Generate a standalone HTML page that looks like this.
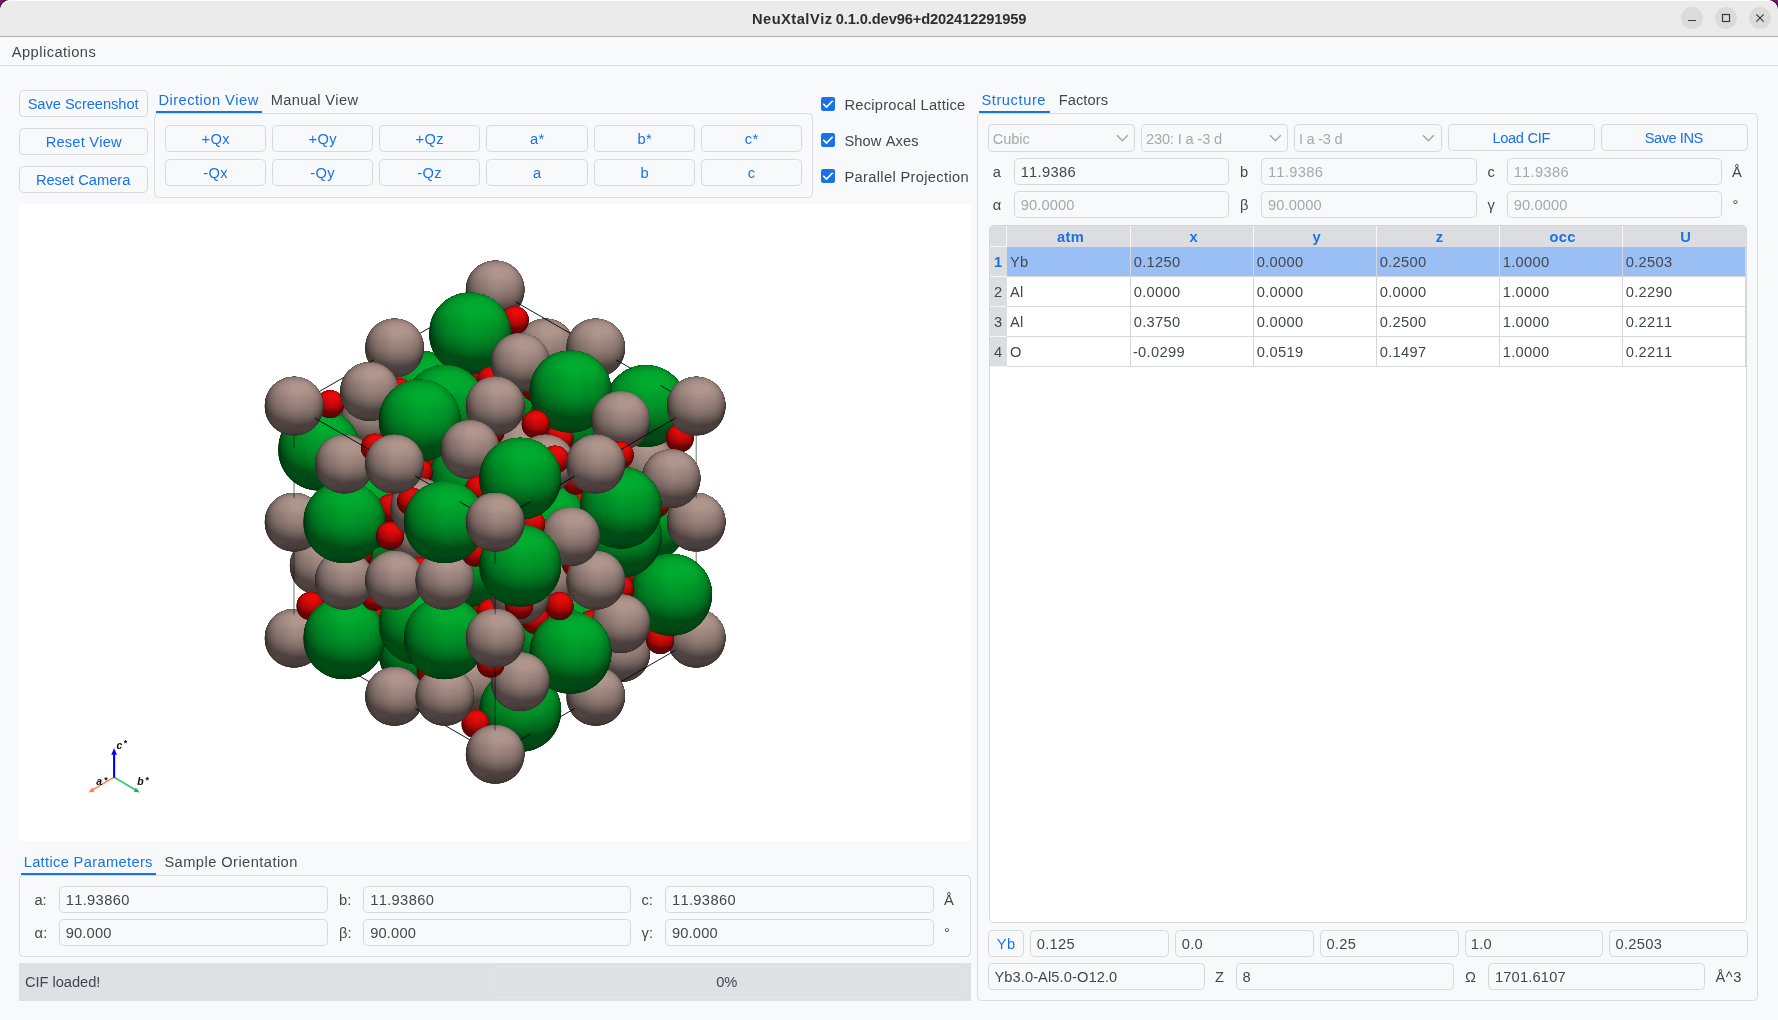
<!DOCTYPE html>
<html><head><meta charset="utf-8"><title>NeuXtalViz</title><style>
html,body{margin:0;padding:0;}
body{width:1778px;height:1020px;overflow:hidden;background:#6c1e68;position:relative;font-family:"Liberation Sans",sans-serif;font-size:14.67px;font-kerning:none;}
#win{position:absolute;left:0;top:0;width:1778px;height:1020px;background:#f8f9fb;border-radius:10px 10px 0 0;overflow:hidden;box-shadow:0 0 0 1px #3a0838;}
.abs,.t,.btn,.fld,.pane,.ul,.tbl,.status,.prog,.wbtn{position:absolute;box-sizing:border-box;}
.t{white-space:nowrap;line-height:20px;height:20px;}
#titlebar{position:absolute;left:0;top:0;width:1778px;height:37px;background:#ebebeb;border-bottom:1px solid #adadad;box-sizing:border-box;border-radius:10px 10px 0 0;box-shadow:inset 0 1px 0 #fbfbfb;}
.wbtn{width:22px;height:22px;border-radius:11px;background:#dbdbdb;}
#menubar{position:absolute;left:0;top:37px;width:1778px;height:29px;border-bottom:1px solid #dcdee3;box-sizing:border-box;}
.btn{border:1px solid #d7d9df;border-radius:4.5px;background:#f8f9fb;}
.fld{border:1px solid #d7d9df;border-radius:4.5px;background:#f8f9fb;}
.pane{border:1px solid #d9dbe0;border-radius:4.5px;}
.ul{background:#1a72e8;}
.tbl{border:1px solid #d5d7dc;border-radius:4px;background:#fff;}
.status{background:#dfe0e4;}
.prog{border:1px solid #e4e5e9;border-radius:3px;}
#txt{position:absolute;left:0;top:0;width:1778px;height:1020px;will-change:transform;}
#view{position:absolute;left:19px;top:204px;width:952px;height:637px;background:#fff;overflow:hidden;}
#view>svg:first-child{position:absolute;left:-1px;top:0;}
</style></head><body><div id="win">
<div id="titlebar"></div>
<div class="wbtn" style="left:1681px;top:7px"></div>
<div class="wbtn" style="left:1715px;top:7px"></div>
<div class="wbtn" style="left:1749px;top:7px"></div>
<svg class="abs" style="left:1680px;top:6px" width="98" height="24" viewBox="1680 6 98 24"><g stroke="#3a3a3a" stroke-width="1.2" fill="none"><path d="M1688 20.5H1696"/><rect x="1722.5" y="14.5" width="7" height="7"/><path d="M1756.3 14.3L1763.7 21.7M1763.7 14.3L1756.3 21.7"/></g></svg>
<div id="menubar"></div>
<div class="btn" style="left:19px;top:90px;width:129px;height:27px;"></div>
<div class="btn" style="left:19px;top:128px;width:129px;height:27px;"></div>
<div class="btn" style="left:19px;top:166px;width:129px;height:27px;"></div>
<div class="ul" style="left:156px;top:110.5px;width:106px;height:2.2px;"></div>
<div class="pane" style="left:154px;top:113px;width:659px;height:85px;"></div>
<div class="btn" style="left:165px;top:125px;width:101px;height:27px;"></div>
<div class="btn" style="left:272px;top:125px;width:101px;height:27px;"></div>
<div class="btn" style="left:379px;top:125px;width:101px;height:27px;"></div>
<div class="btn" style="left:486px;top:125px;width:102px;height:27px;"></div>
<div class="btn" style="left:594px;top:125px;width:101px;height:27px;"></div>
<div class="btn" style="left:701px;top:125px;width:101px;height:27px;"></div>
<div class="btn" style="left:165px;top:159px;width:101px;height:27px;"></div>
<div class="btn" style="left:272px;top:159px;width:101px;height:27px;"></div>
<div class="btn" style="left:379px;top:159px;width:101px;height:27px;"></div>
<div class="btn" style="left:486px;top:159px;width:102px;height:27px;"></div>
<div class="btn" style="left:594px;top:159px;width:101px;height:27px;"></div>
<div class="btn" style="left:701px;top:159px;width:101px;height:27px;"></div>
<svg class="abs" style="left:821px;top:97px" width="14" height="14" viewBox="0 0 14 14"><rect width="14" height="14" rx="2.2" fill="#1a72e8"/><path d="M2.2 6.8L5.5 10L11.7 3.7" stroke="#fff" stroke-width="1.6" fill="none" stroke-linejoin="miter"/></svg>
<svg class="abs" style="left:821px;top:133px" width="14" height="14" viewBox="0 0 14 14"><rect width="14" height="14" rx="2.2" fill="#1a72e8"/><path d="M2.2 6.8L5.5 10L11.7 3.7" stroke="#fff" stroke-width="1.6" fill="none" stroke-linejoin="miter"/></svg>
<svg class="abs" style="left:821px;top:169px" width="14" height="14" viewBox="0 0 14 14"><rect width="14" height="14" rx="2.2" fill="#1a72e8"/><path d="M2.2 6.8L5.5 10L11.7 3.7" stroke="#fff" stroke-width="1.6" fill="none" stroke-linejoin="miter"/></svg>
<div id="view"><svg width="953" height="637" viewBox="18 204 953 637">
<defs><g id="sA"><circle r="29.3" fill="#292424"/><path d="M23.1 -18L21.4 -20L19.7 -21.7L18.1 -23L16.5 -24.2L15 -25.2L13.6 -26L12.2 -26.6L10.9 -27.2L9.6 -27.7L8.4 -28.1L7.3 -28.4L6.1 -28.7L4.9 -28.9L3.8 -29.1L2.6 -29.2L1.5 -29.3L0.2 -29.3L-1 -29.3L-2.3 -29.2L-3.7 -29.1L-5.2 -28.8L-6.8 -28.5L-8.5 -28L-10.3 -27.4L-12.3 -26.6L-14.3 -25.6L-16.5 -24.2L-18.7 -22.6L-20.9 -20.5L-23.1 -18L-25.1 -15.1L-26.8 -11.8L-28.2 -8L-29 -3.9L-29.2 0.4L-28.9 4.9L-27.8 9.4L-25.9 13.7L-23.3 17.7L-20.1 21.3L-16.2 24.4L-11.9 26.8L-7.2 28.4L-2.3 29.2L2.6 29.2L7.5 28.3L12.1 26.7L16.4 24.3L20.1 21.3L23.3 17.8L25.8 13.9L27.6 9.7L28.8 5.5L29.3 1.3L29.2 -2.7L28.6 -6.5L27.6 -9.9L26.3 -13L24.7 -15.7Z" fill="#302927"/><path d="M23.1 -18L21.4 -20L19.7 -21.7L18.1 -23L16.5 -24.2L15 -25.2L13.6 -26L12.2 -26.6L10.9 -27.2L9.6 -27.7L8.4 -28.1L7.3 -28.4L6.1 -28.7L4.9 -28.9L3.8 -29.1L2.6 -29.2L1.5 -29.3L0.2 -29.3L-1 -29.3L-2.3 -29.2L-3.7 -29.1L-5.2 -28.8L-6.8 -28.5L-8.5 -28L-10.3 -27.4L-12.3 -26.6L-14.3 -25.6L-16.5 -24.2L-18.7 -22.6L-20.9 -20.5L-23.1 -18L-25.1 -15.1L-26.8 -11.8L-28.2 -8L-28.9 -4L-28.8 0.1L-28.9 4.9L-27.8 9.4L-25.9 13.7L-23.3 17.7L-20.1 21.3L-16.2 24.4L-11.9 26.8L-7.2 28.4L-2.3 29.2L2.6 29.2L7.5 28.3L12.1 26.7L16.4 24.3L20.1 21.3L23.3 17.8L25.8 13.9L27.6 9.7L28.7 5.5L29.3 1.3L29.2 -2.7L28.6 -6.5L27.6 -9.9L26.3 -13L24.7 -15.7Z" fill="#352d2b"/><path d="M23.1 -18L21.4 -20L19.7 -21.7L18.1 -23L16.5 -24.2L15 -25.2L13.6 -26L12.2 -26.6L10.9 -27.2L9.6 -27.7L8.4 -28.1L7.3 -28.4L6.1 -28.7L4.9 -28.9L3.8 -29.1L2.6 -29.2L1.5 -29.3L0.2 -29.3L-1 -29.3L-2.3 -29.2L-3.7 -29.1L-5.2 -28.8L-6.8 -28.5L-8.5 -28L-10.3 -27.4L-12.3 -26.6L-14.3 -25.6L-16.5 -24.2L-18.7 -22.6L-20.9 -20.5L-23.1 -18L-25.1 -15.1L-26.8 -11.8L-28.2 -8L-28.7 -4.1L-28.6 0L-28.5 4.6L-27.8 9.3L-25.9 13.7L-23.3 17.7L-20.1 21.3L-16.2 24.4L-11.9 26.8L-7.2 28.4L-2.3 28.9L2.6 28.9L7.5 28.3L12.1 26.7L16.4 24.3L20.1 21.3L23.3 17.8L25.8 13.9L27.5 9.6L28.6 5.4L29.2 1.3L29.2 -2.7L28.6 -6.5L27.6 -9.9L26.3 -13L24.7 -15.7Z" fill="#3a322f"/><path d="M23.1 -18L21.4 -20L19.7 -21.7L18.1 -23L16.5 -24.2L15 -25.2L13.6 -26L12.2 -26.6L10.9 -27.2L9.6 -27.7L8.4 -28.1L7.3 -28.4L6.1 -28.7L4.9 -28.9L3.8 -29.1L2.6 -29.2L1.5 -29.3L0.2 -29.3L-1 -29.3L-2.3 -29.2L-3.7 -29.1L-5.2 -28.8L-6.8 -28.5L-8.5 -28L-10.3 -27.4L-12.3 -26.6L-14.3 -25.6L-16.5 -24.2L-18.7 -22.6L-20.9 -20.5L-23.1 -18L-25.1 -15.1L-26.8 -11.8L-28.1 -8L-28.5 -4.1L-28.3 -0.2L-27.4 3.8L-27.5 9.1L-25.9 13.7L-23.3 17.7L-20.1 21.3L-16.2 24.4L-11.9 26.8L-7.2 28.2L-2.2 28.2L2.6 28.1L7.5 28L12.1 26.6L16.4 24.3L20.1 21.3L23.3 17.7L25.6 13.6L27.1 9.1L28.5 5.3L29.2 1.3L29.2 -2.7L28.6 -6.5L27.6 -9.9L26.3 -13L24.7 -15.7Z" fill="#3f3633"/><path d="M23.1 -18L21.4 -20L19.7 -21.7L18.1 -23L16.5 -24.2L15 -25.2L13.6 -26L12.2 -26.6L10.9 -27.2L9.6 -27.7L8.4 -28.1L7.3 -28.4L6.1 -28.7L4.9 -28.9L3.8 -29.1L2.6 -29.2L1.5 -29.3L0.2 -29.3L-1 -29.3L-2.3 -29.2L-3.7 -29.1L-5.2 -28.8L-6.8 -28.5L-8.5 -28L-10.3 -27.4L-12.3 -26.6L-14.3 -25.6L-16.5 -24.2L-18.7 -22.6L-20.9 -20.5L-23.1 -18L-25.1 -15.1L-26.8 -11.8L-28 -8.1L-28.3 -4.3L-28 -0.3L-27.1 3.6L-26.5 8.3L-25.6 13.3L-23.2 17.6L-20 21.3L-16.2 24.3L-11.8 26.4L-7 27.3L-2.1 27.1L2.6 27L7.4 27.1L12 26.1L16.3 24L20 21L23 17.2L25 12.7L26.9 8.9L28.3 5.1L29.1 1.2L29.2 -2.7L28.6 -6.5L27.6 -9.9L26.3 -13L24.7 -15.7Z" fill="#443a38"/><path d="M23.1 -18L21.4 -20L19.7 -21.7L18.1 -23L16.5 -24.2L15 -25.2L13.6 -26L12.2 -26.6L10.9 -27.2L9.6 -27.7L8.4 -28.1L7.3 -28.4L6.1 -28.7L4.9 -28.9L3.8 -29.1L2.6 -29.2L1.5 -29.3L0.2 -29.3L-1 -29.3L-2.3 -29.2L-3.7 -29.1L-5.2 -28.8L-6.8 -28.5L-8.5 -28L-10.3 -27.4L-12.3 -26.6L-14.3 -25.6L-16.5 -24.2L-18.7 -22.6L-20.9 -20.5L-23.1 -18L-25.1 -15.1L-26.8 -11.8L-27.8 -8.1L-28 -4.4L-27.6 -0.5L-26.7 3.3L-25 6.9L-24.6 12.2L-22.8 17L-19.7 20.8L-15.9 23.7L-11.5 25.5L-6.5 25.1L-1.9 25.3L2.6 25L7.1 24.6L11.7 24.7L15.9 22.9L19.5 19.9L22.1 15.7L24.4 11.9L26.6 8.6L28.1 4.9L28.9 1.1L29.1 -2.7L28.6 -6.5L27.6 -9.9L26.3 -13L24.7 -15.7Z" fill="#493e3c"/><path d="M23.1 -18L21.4 -20L19.7 -21.7L18.1 -23L16.5 -24.2L15 -25.2L13.6 -26L12.2 -26.6L10.9 -27.2L9.6 -27.7L8.4 -28.1L7.3 -28.4L6.1 -28.7L4.9 -28.9L3.8 -29.1L2.6 -29.2L1.5 -29.3L0.2 -29.3L-1 -29.3L-2.3 -29.2L-3.7 -29.1L-5.2 -28.8L-6.8 -28.5L-8.5 -28L-10.3 -27.4L-12.3 -26.6L-14.3 -25.6L-16.5 -24.2L-18.7 -22.6L-20.9 -20.5L-23.1 -18L-25.1 -15.1L-26.7 -11.8L-27.6 -8.2L-27.6 -4.5L-27.3 -0.8L-26.3 3L-24.6 6.5L-22.3 9.6L-21.1 14.6L-18.8 19.2L-15.1 21.9L-10.3 21.7L-5.2 19L-1.5 21.2L2.6 20.2L6.5 18.5L10.3 18.2L14.4 18.3L17.9 16.2L21.2 14.2L24.1 11.5L26.3 8.3L27.9 4.7L28.8 1L29.1 -2.8L28.6 -6.5L27.6 -9.9L26.3 -13L24.7 -15.7Z" fill="#4e4340"/><path d="M23.1 -18L21.4 -20L19.7 -21.7L18.1 -23L16.5 -24.2L15 -25.2L13.6 -26L12.2 -26.6L10.9 -27.2L9.6 -27.7L8.4 -28.1L7.3 -28.4L6.1 -28.7L4.9 -28.9L3.8 -29.1L2.6 -29.2L1.5 -29.3L0.2 -29.3L-1 -29.3L-2.3 -29.2L-3.7 -29.1L-5.2 -28.8L-6.8 -28.5L-8.5 -28L-10.3 -27.4L-12.3 -26.6L-14.3 -25.6L-16.5 -24.2L-18.7 -22.6L-20.9 -20.5L-23.1 -18L-25.1 -15.1L-26.6 -11.8L-27.3 -8.3L-27.2 -4.7L-26.8 -1L-25.8 2.6L-24.1 6.1L-21.8 9.1L-18.9 11.7L-15.7 13.7L-12.1 15.2L-8.4 16L-4.9 17.2L-1.1 17.9L2.6 18.1L6.4 17.7L10.2 17.4L13.9 16.8L17.6 15.5L20.9 13.6L23.8 11.1L26 8L27.6 4.5L28.5 0.8L28.9 -2.8L28.6 -6.5L27.6 -9.9L26.3 -13L24.7 -15.7Z" fill="#534744"/><path d="M23.1 -18L21.4 -20L19.7 -21.7L18.1 -23L16.5 -24.2L15 -25.2L13.6 -26L12.2 -26.6L10.9 -27.2L9.6 -27.7L8.4 -28.1L7.3 -28.4L6.1 -28.7L4.9 -28.9L3.8 -29.1L2.6 -29.2L1.5 -29.3L0.2 -29.3L-1 -29.3L-2.3 -29.2L-3.7 -29.1L-5.2 -28.8L-6.8 -28.5L-8.5 -28L-10.3 -27.4L-12.3 -26.6L-14.3 -25.6L-16.5 -24.2L-18.7 -22.6L-20.9 -20.5L-23.1 -18L-25 -15.1L-26.3 -11.9L-27 -8.4L-26.8 -4.9L-26.3 -1.3L-25.3 2.3L-23.6 5.6L-21.3 8.5L-18.4 11L-15.2 12.9L-11.8 14.3L-8.2 15.2L-4.7 16.4L-1.1 17.1L2.6 17.3L6.3 16.9L10 16.5L13.7 16L17.3 14.8L20.6 13L23.4 10.6L25.7 7.6L27.3 4.2L28.3 0.6L28.7 -2.9L28.5 -6.5L27.6 -9.9L26.3 -13L24.7 -15.7Z" fill="#584b48"/><path d="M23.1 -18L21.4 -20L19.7 -21.7L18.1 -23L16.5 -24.2L15 -25.2L13.6 -26L12.2 -26.6L10.9 -27.2L9.6 -27.7L8.4 -28.1L7.3 -28.4L6.1 -28.7L4.9 -28.9L3.8 -29.1L2.6 -29.2L1.5 -29.3L0.2 -29.3L-1 -29.3L-2.3 -29.2L-3.7 -29.1L-5.2 -28.8L-6.8 -28.5L-8.5 -28L-10.3 -27.4L-12.3 -26.6L-14.3 -25.6L-16.5 -24.2L-18.7 -22.6L-20.9 -20.5L-23.1 -18L-24.8 -15.1L-26.1 -11.9L-26.6 -8.5L-26.3 -5.1L-25.8 -1.6L-24.7 1.8L-23 5.1L-20.7 7.9L-17.9 10.3L-14.8 12.1L-11.4 13.4L-7.9 14.4L-4.5 15.5L-1 16.2L2.6 16.4L6.2 16.1L9.8 15.6L13.4 15.2L16.9 14.1L20.2 12.4L23 10L25.3 7.2L27 3.9L27.9 0.4L28.5 -3.1L28.4 -6.6L27.6 -9.9L26.3 -13L24.7 -15.7Z" fill="#5d504c"/><path d="M23.1 -18L21.4 -20L19.7 -21.7L18.1 -23L16.5 -24.2L15 -25.2L13.6 -26L12.2 -26.6L10.9 -27.2L9.6 -27.7L8.4 -28.1L7.3 -28.4L6.1 -28.7L4.9 -28.9L3.8 -29.1L2.6 -29.2L1.5 -29.3L0.2 -29.3L-1 -29.3L-2.3 -29.2L-3.7 -29.1L-5.2 -28.8L-6.8 -28.5L-8.5 -28L-10.3 -27.4L-12.3 -26.6L-14.3 -25.6L-16.5 -24.2L-18.7 -22.6L-20.9 -20.5L-23 -18L-24.6 -15.2L-25.7 -12L-26.1 -8.7L-25.7 -5.4L-25.1 -2L-24.1 1.4L-22.4 4.5L-20.1 7.2L-17.4 9.5L-14.3 11.2L-10.9 12.4L-7.6 13.5L-4.3 14.6L-0.9 15.3L2.6 15.5L6.1 15.2L9.6 14.6L13.1 14.3L16.6 13.3L19.8 11.7L22.6 9.4L24.9 6.7L26.6 3.5L27.6 0.1L28.2 -3.3L28.2 -6.6L27.5 -9.9L26.3 -13L24.7 -15.7Z" fill="#625450"/><path d="M23.1 -18L21.4 -20L19.7 -21.7L18.1 -23L16.5 -24.2L15 -25.2L13.6 -26L12.2 -26.6L10.9 -27.2L9.6 -27.7L8.4 -28.1L7.3 -28.4L6.1 -28.7L4.9 -28.9L3.8 -29.1L2.6 -29.2L1.5 -29.3L0.2 -29.3L-1 -29.3L-2.3 -29.2L-3.7 -29.1L-5.2 -28.8L-6.8 -28.5L-8.5 -28L-10.3 -27.4L-12.3 -26.6L-14.3 -25.6L-16.5 -24.2L-18.7 -22.6L-20.9 -20.5L-22.8 -18L-24.4 -15.2L-25.3 -12.1L-25.6 -8.8L-25.1 -5.7L-24.5 -2.4L-23.4 0.9L-21.7 3.9L-19.4 6.5L-16.7 8.7L-13.7 10.3L-10.5 11.4L-7.3 12.6L-4.1 13.6L-0.8 14.3L2.6 14.5L6 14.2L9.4 13.6L12.8 13.3L16.2 12.4L19.3 10.9L22.1 8.8L24.4 6.2L26.1 3.1L27.2 -0.2L27.9 -3.5L28 -6.7L27.4 -10L26.2 -13L24.7 -15.7Z" fill="#675854"/><path d="M23.1 -18L21.4 -20L19.7 -21.7L18.1 -23L16.5 -24.2L15 -25.2L13.6 -26L12.2 -26.6L10.9 -27.2L9.6 -27.7L8.4 -28.1L7.3 -28.4L6.1 -28.7L4.9 -28.9L3.8 -29.1L2.6 -29.2L1.5 -29.3L0.2 -29.3L-1 -29.3L-2.3 -29.2L-3.7 -29.1L-5.2 -28.8L-6.8 -28.5L-8.5 -28L-10.3 -27.4L-12.3 -26.6L-14.3 -25.6L-16.5 -24.2L-18.6 -22.5L-20.7 -20.5L-22.6 -18L-24 -15.2L-24.8 -12.2L-25 -9L-24.4 -6L-23.7 -2.8L-22.6 0.3L-20.9 3.2L-18.7 5.7L-16.1 7.7L-13.1 9.3L-10 10.3L-7 11.6L-3.9 12.6L-0.7 13.3L2.6 13.5L5.9 13.2L9.1 12.5L12.5 12.3L15.8 11.5L18.9 10.1L21.6 8.1L23.9 5.6L25.6 2.7L26.7 -0.6L27.5 -3.7L27.7 -6.9L27.2 -10L26.2 -13L24.7 -15.7Z" fill="#6c5d58"/><path d="M23.1 -18L21.4 -20L19.7 -21.7L18.1 -23L16.5 -24.2L15 -25.2L13.6 -26L12.2 -26.6L10.9 -27.2L9.6 -27.7L8.4 -28.1L7.3 -28.4L6.1 -28.7L4.9 -28.9L3.8 -29.1L2.6 -29.2L1.5 -29.3L0.2 -29.3L-1 -29.3L-2.3 -29.2L-3.7 -29.1L-5.2 -28.8L-6.8 -28.5L-8.5 -28L-10.3 -27.4L-12.2 -26.6L-14.3 -25.6L-16.4 -24.2L-18.5 -22.5L-20.5 -20.5L-22.2 -18L-23.6 -15.3L-24.3 -12.3L-24.3 -9.3L-23.6 -6.3L-22.9 -3.3L-21.8 -0.3L-20.1 2.5L-18 4.8L-15.4 6.8L-12.5 8.2L-9.5 9.1L-6.6 10.5L-3.7 11.6L-0.5 12.2L2.6 12.4L5.8 12.1L8.9 11.4L12.1 11.2L15.3 10.5L18.4 9.2L21.1 7.4L23.3 5L25 2.2L26.1 -1L27 -4L27.3 -7L27 -10.1L26 -13L24.7 -15.7Z" fill="#71615c"/><path d="M23.1 -18L21.4 -20L19.7 -21.7L18.1 -23L16.5 -24.2L15 -25.2L13.6 -26L12.2 -26.6L10.9 -27.2L9.6 -27.7L8.4 -28.1L7.3 -28.4L6.1 -28.7L4.9 -28.9L3.8 -29.1L2.6 -29.2L1.5 -29.2L0.2 -29.3L-1 -29.2L-2.3 -29.2L-3.7 -29L-5.2 -28.8L-6.8 -28.5L-8.5 -28L-10.3 -27.4L-12.2 -26.6L-14.2 -25.5L-16.3 -24.2L-18.3 -22.5L-20.2 -20.4L-21.9 -18L-23.1 -15.3L-23.7 -12.4L-23.6 -9.5L-22.8 -6.7L-22 -3.8L-20.9 -0.9L-19.2 1.7L-17.1 3.9L-14.6 5.7L-11.8 7L-9 8.1L-6.3 9.5L-3.4 10.4L-0.4 11L2.6 11.2L5.7 11L8.7 10.3L11.7 10L14.9 9.4L17.8 8.3L20.5 6.5L22.7 4.3L24.4 1.6L25.5 -1.4L26.4 -4.3L26.9 -7.2L26.7 -10.2L25.8 -13.1L24.6 -15.7Z" fill="#766560"/><path d="M23 -18L21.4 -20L19.7 -21.7L18.1 -23L16.5 -24.2L15 -25.2L13.6 -26L12.2 -26.6L10.9 -27.2L9.6 -27.7L8.4 -28.1L7.3 -28.4L6.1 -28.6L4.9 -28.9L3.8 -29L2.6 -29.1L1.5 -29.2L0.3 -29.2L-1 -29.1L-2.3 -29.1L-3.7 -28.9L-5.1 -28.7L-6.7 -28.4L-8.4 -28L-10.2 -27.3L-12.1 -26.5L-14 -25.4L-16.1 -24.1L-18 -22.4L-19.8 -20.4L-21.4 -18L-22.4 -15.4L-22.9 -12.6L-22.7 -9.8L-21.8 -7.1L-20.9 -4.4L-19.9 -1.7L-18.3 0.8L-16.2 2.9L-13.8 4.5L-11.1 5.7L-8.5 7L-5.9 8.3L-3.2 9.2L-0.3 9.8L2.6 10L5.6 9.8L8.4 9.1L11.3 8.7L14.3 8.3L17.2 7.2L19.8 5.6L22 3.5L23.7 0.9L24.8 -1.9L25.8 -4.6L26.4 -7.4L26.3 -10.3L25.6 -13.1L24.4 -15.7Z" fill="#7c6a64"/><path d="M22.8 -18L21.2 -20L19.6 -21.6L18 -23L16.5 -24.2L15 -25.1L13.6 -26L12.2 -26.6L10.9 -27.2L9.6 -27.6L8.4 -28L7.2 -28.3L6.1 -28.6L4.9 -28.8L3.8 -28.9L2.6 -29L1.5 -29L0.3 -29L-0.9 -29L-2.2 -28.9L-3.6 -28.8L-5.1 -28.6L-6.6 -28.3L-8.3 -27.8L-10 -27.2L-11.9 -26.4L-13.8 -25.3L-15.8 -24L-17.7 -22.3L-19.4 -20.3L-20.8 -18L-21.7 -15.5L-22.1 -12.8L-21.8 -10.1L-20.8 -7.6L-19.8 -5.1L-18.7 -2.5L-17.2 -0.2L-15.2 1.7L-12.8 3.3L-10.3 4.3L-8 5.8L-5.5 7L-2.9 8L-0.2 8.5L2.6 8.7L5.4 8.5L8.1 7.9L10.9 7.3L13.8 7L16.5 6.1L19.1 4.6L21.2 2.6L22.9 0.2L24 -2.5L25.1 -5L25.8 -7.7L25.8 -10.5L25.2 -13.2L24.1 -15.8Z" fill="#816e68"/><path d="M22.5 -18L21 -20L19.5 -21.6L17.9 -23L16.4 -24.1L14.9 -25.1L13.5 -25.9L12.1 -26.6L10.8 -27.1L9.6 -27.6L8.4 -27.9L7.2 -28.2L6 -28.5L4.9 -28.6L3.8 -28.7L2.6 -28.8L1.5 -28.8L0.3 -28.8L-0.9 -28.8L-2.1 -28.7L-3.5 -28.6L-4.9 -28.4L-6.4 -28.1L-8.1 -27.7L-9.8 -27.1L-11.6 -26.3L-13.5 -25.2L-15.4 -23.9L-17.2 -22.2L-18.8 -20.3L-20.1 -18L-20.9 -15.5L-21.1 -13L-20.7 -10.4L-19.7 -8.1L-18.4 -5.9L-17.4 -3.4L-15.9 -1.3L-14 0.5L-11.8 1.8L-9.5 3L-7.4 4.5L-5.1 5.7L-2.6 6.6L0 7.1L2.6 7.3L5.3 7.1L7.9 6.5L10.4 5.8L13.1 5.6L15.8 4.8L18.3 3.5L20.4 1.7L22 -0.6L23.1 -3.1L24.4 -5.5L25.1 -8L25.2 -10.7L24.7 -13.3L23.8 -15.8Z" fill="#86726c"/><path d="M22.2 -18L20.8 -19.9L19.3 -21.6L17.7 -22.9L16.2 -24.1L14.8 -25L13.4 -25.8L12 -26.5L10.7 -27L9.5 -27.4L8.3 -27.8L7.1 -28.1L6 -28.3L4.8 -28.4L3.7 -28.5L2.6 -28.5L1.5 -28.6L0.4 -28.6L-0.8 -28.5L-2 -28.4L-3.3 -28.3L-4.7 -28.1L-6.2 -27.8L-7.8 -27.4L-9.5 -26.8L-11.3 -26L-13.1 -25L-14.9 -23.7L-16.6 -22.1L-18.1 -20.2L-19.3 -18L-20 -15.6L-20.1 -13.2L-19.5 -10.8L-18.4 -8.6L-16.9 -6.8L-15.9 -4.5L-14.5 -2.6L-12.7 -1L-10.6 0.2L-8.7 1.6L-6.8 3.1L-4.6 4.2L-2.3 5.1L0.2 5.6L2.6 5.8L5.1 5.6L7.5 5L9.8 4.1L12.4 4L15 3.4L17.3 2.2L19.4 0.6L21 -1.5L22.1 -3.9L23.5 -6L24.3 -8.4L24.6 -10.9L24.2 -13.4L23.3 -15.8Z" fill="#8b7770"/><path d="M21.7 -18L20.4 -19.9L18.9 -21.5L17.5 -22.8L16 -24L14.6 -24.9L13.2 -25.7L11.8 -26.3L10.6 -26.8L9.3 -27.2L8.1 -27.6L7 -27.8L5.9 -28L4.8 -28.1L3.7 -28.2L2.6 -28.2L1.6 -28.2L0.5 -28.3L-0.7 -28.2L-1.8 -28.1L-3.1 -27.9L-4.4 -27.7L-5.9 -27.5L-7.4 -27.1L-9.1 -26.5L-10.8 -25.8L-12.5 -24.8L-14.3 -23.5L-15.9 -22L-17.3 -20.1L-18.3 -18L-18.8 -15.8L-18.8 -13.5L-18.2 -11.3L-17 -9.3L-15.4 -7.6L-14.1 -5.9L-12.8 -4.1L-11.1 -2.8L-9.4 -1.4L-7.9 0.2L-6.1 1.5L-4.1 2.6L-1.9 3.4L0.3 3.9L2.6 4.1L4.9 3.9L7.2 3.4L9.3 2.6L11.6 2.2L14 1.7L16.3 0.8L18.2 -0.7L19.8 -2.6L21 -4.7L22.5 -6.6L23.4 -8.8L23.8 -11.2L23.5 -13.6L22.8 -15.9Z" fill="#907b74"/><path d="M21.1 -18L19.9 -19.8L18.5 -21.4L17.1 -22.7L15.7 -23.8L14.3 -24.7L12.9 -25.5L11.6 -26.1L10.3 -26.6L9.1 -27L8 -27.3L6.8 -27.5L5.8 -27.6L4.7 -27.7L3.7 -27.7L2.6 -27.8L1.6 -27.8L0.6 -27.8L-0.5 -27.8L-1.7 -27.7L-2.8 -27.5L-4.1 -27.2L-5.5 -27L-7 -26.7L-8.5 -26.1L-10.2 -25.4L-11.9 -24.5L-13.5 -23.3L-15 -21.8L-16.2 -20L-17.1 -18L-17.5 -15.9L-17.3 -13.8L-16.6 -11.8L-15.4 -10L-13.7 -8.6L-11.9 -7.5L-10.6 -6.1L-9.4 -4.7L-8.3 -3L-6.9 -1.5L-5.3 -0.2L-3.5 0.8L-1.5 1.6L0.5 2L2.6 2.2L4.7 2L6.8 1.6L8.7 0.8L10.7 0L12.9 -0.2L15 -1L16.9 -2.2L18.3 -3.9L19.8 -5.5L21.4 -7.2L22.4 -9.2L22.8 -11.5L22.7 -13.8L22.1 -16Z" fill="#957f78"/><path d="M20.4 -18L19.2 -19.8L17.9 -21.3L16.6 -22.6L15.2 -23.6L13.8 -24.5L12.5 -25.2L11.2 -25.8L10 -26.2L8.9 -26.6L7.7 -26.8L6.6 -27L5.6 -27.1L4.6 -27.2L3.6 -27.2L2.6 -27.3L1.7 -27.3L0.7 -27.3L-0.4 -27.3L-1.4 -27.1L-2.5 -26.9L-3.6 -26.7L-4.9 -26.4L-6.3 -26.1L-7.8 -25.6L-9.4 -25L-10.9 -24.1L-12.5 -22.9L-13.8 -21.5L-14.9 -19.9L-15.6 -18L-15.9 -16.1L-15.6 -14.1L-14.7 -12.4L-13.4 -10.9L-11.8 -9.7L-10 -8.8L-8.7 -7.8L-7.9 -6.4L-6.9 -4.8L-5.8 -3.4L-4.4 -2.2L-2.8 -1.3L-1.1 -0.6L0.8 -0.1L2.6 0L4.5 -0.1L6.3 -0.6L8.1 -1.3L9.6 -2.3L11.5 -2.7L13.4 -3.1L15.2 -4.1L16.6 -5.5L18.5 -6.5L20 -8L21.2 -9.8L21.7 -11.8L21.7 -14L21.2 -16.1Z" fill="#9a847c"/><path d="M19.4 -18L18.4 -19.7L17.2 -21.1L15.9 -22.3L14.6 -23.3L13.3 -24.2L12 -24.8L10.8 -25.3L9.6 -25.7L8.5 -26L7.4 -26.2L6.4 -26.4L5.4 -26.4L4.4 -26.4L3.5 -26.5L2.6 -26.6L1.7 -26.6L0.8 -26.6L-0.1 -26.6L-1.1 -26.5L-2.1 -26.3L-3.2 -26L-4.2 -25.7L-5.4 -25.2L-6.8 -24.9L-8.2 -24.3L-9.7 -23.5L-11.1 -22.5L-12.3 -21.2L-13.2 -19.7L-13.8 -18L-13.8 -16.3L-13.4 -14.6L-12.4 -13.1L-11 -11.9L-9.4 -11.1L-8.4 -10L-7.4 -9L-6.3 -8.1L-5.3 -7.2L-4.4 -5.9L-3.3 -4.8L-2 -3.9L-0.5 -3.2L1 -2.8L2.6 -2.7L4.2 -2.8L5.8 -3.2L7.2 -3.9L8.5 -4.9L9.5 -6.1L11.1 -6.4L13 -6.5L15 -6.9L16.9 -7.7L18.5 -8.9L19.7 -10.4L20.4 -12.3L20.5 -14.2L20.1 -16.2Z" fill="#9f8880"/><path d="M18.2 -18L17.3 -19.6L16.2 -20.9L15 -22L13.7 -23L12.5 -23.7L11.3 -24.3L10.1 -24.7L9 -25.1L7.9 -25.3L6.9 -25.4L5.9 -25.4L5 -25.4L4.2 -25.6L3.4 -25.7L2.6 -25.8L1.8 -25.8L1 -25.8L0.1 -25.7L-0.7 -25.6L-1.6 -25.4L-2.6 -25.2L-3.5 -24.8L-4.5 -24.4L-5.4 -23.9L-6.5 -23.3L-7.8 -22.7L-9.1 -21.8L-10.1 -20.7L-10.8 -19.4L-11.1 -18L-10.9 -16.6L-10.2 -15.3L-9.1 -14.2L-8.4 -13.1L-7.7 -12.1L-6.9 -11.1L-6 -10.3L-5 -9.5L-4 -8.9L-2.9 -8.4L-1.9 -7.9L-0.8 -7.6L0.3 -7.1L1.4 -6.7L2.6 -6.6L3.8 -6.7L4.9 -7.2L6.1 -7.3L7.3 -7.6L8.4 -8L9.5 -8.6L11.2 -8.5L13.1 -8.6L14.9 -9.1L16.6 -10L17.9 -11.2L18.7 -12.8L19 -14.6L18.8 -16.3Z" fill="#a58c84"/><path d="M16.4 -18L15.7 -19.4L14.7 -20.6L13.6 -21.6L12.5 -22.4L11.3 -23L10.2 -23.5L9.1 -23.8L8 -24L7 -24.1L6.1 -24L5.4 -24.1L4.7 -24.3L4 -24.4L3.3 -24.6L2.6 -24.6L1.9 -24.6L1.2 -24.6L0.5 -24.6L-0.2 -24.5L-1 -24.3L-1.8 -24.1L-2.6 -23.8L-3.4 -23.4L-4.1 -22.9L-4.9 -22.4L-5.6 -21.7L-6.2 -20.9L-6.7 -20L-7 -19L-7.2 -18L-7.2 -17L-7.1 -16L-6.7 -15L-6.3 -14.1L-5.7 -13.2L-5 -12.5L-4.3 -11.8L-3.5 -11.2L-2.7 -10.7L-1.8 -10.3L-1 -9.9L-0.1 -9.7L0.8 -9.4L1.7 -9.3L2.6 -9.2L3.6 -9.2L4.5 -9.3L5.4 -9.4L6.4 -9.7L7.3 -10L8.2 -10.4L9 -10.9L10.5 -10.9L12.3 -11L14 -11.5L15.4 -12.3L16.4 -13.6L16.9 -15L16.8 -16.5Z" fill="#aa9188"/><path d="M13.5 -18L13 -19.1L12.2 -20L11.2 -20.8L10.1 -21.3L8.9 -21.6L7.7 -21.7L6.7 -21.6L6.2 -21.9L5.7 -22.2L5.2 -22.4L4.7 -22.6L4.2 -22.7L3.7 -22.8L3.1 -22.9L2.6 -22.9L2.1 -22.9L1.6 -22.9L1.1 -22.9L0.5 -22.8L0 -22.7L-0.6 -22.5L-1.2 -22.3L-1.8 -22L-2.3 -21.6L-2.8 -21.2L-3.3 -20.7L-3.7 -20.1L-4.1 -19.4L-4.3 -18.7L-4.4 -18L-4.3 -17.3L-4.2 -16.6L-3.9 -15.9L-3.6 -15.2L-3.2 -14.7L-2.7 -14.1L-2.2 -13.7L-1.6 -13.3L-1 -13L-0.4 -12.7L0.2 -12.4L0.8 -12.3L1.4 -12.1L2 -12L2.6 -12L3.3 -12L3.9 -12L4.6 -12.1L5.2 -12.2L5.9 -12.5L6.5 -12.7L7.1 -13.1L7.7 -13.5L8.2 -14L8.7 -14.5L10.9 -14.3L12.4 -14.8L13.4 -15.7L13.7 -16.9Z" fill="#af958c"/></g><g id="sY"><circle r="40.9" fill="#00290c"/><path d="M32.3 -25.2L30.3 -27.5L28.3 -29.5L26.4 -31.2L24.5 -32.7L22.7 -34L21 -35.1L19.3 -36.1L17.7 -36.9L16.1 -37.6L14.6 -38.2L13.2 -38.7L11.8 -39.2L10.4 -39.6L9 -39.9L7.7 -40.2L6.4 -40.4L5 -40.6L3.7 -40.7L2.3 -40.8L0.9 -40.9L-0.5 -40.9L-2 -40.8L-3.6 -40.7L-5.2 -40.6L-6.9 -40.3L-8.7 -40L-10.7 -39.5L-12.7 -38.9L-14.8 -38.1L-17.1 -37.2L-19.5 -36L-22 -34.5L-24.5 -32.7L-27.1 -30.6L-29.7 -28.1L-32.3 -25.2L-34.6 -21.8L-36.7 -18L-38.5 -13.9L-39.8 -9.3L-40.5 -4.5L-40.8 0.5L-40.5 5.8L-39.4 11L-37.6 16.1L-35.1 21L-31.9 25.6L-28 29.8L-23.6 33.4L-18.7 36.4L-13.4 38.6L-7.8 40.1L-2.1 40.8L3.7 40.7L9.4 39.8L14.8 38.1L20 35.7L24.7 32.6L28.9 28.9L32.5 24.8L35.5 20.3L37.8 15.5L39.5 10.7L40.5 5.7L40.9 0.9L40.7 -3.8L40.1 -8.2L39 -12.3L37.6 -16.1L36 -19.5L34.2 -22.5Z" fill="#002e0d"/><path d="M32.3 -25.2L30.3 -27.5L28.3 -29.5L26.4 -31.2L24.5 -32.7L22.7 -34L21 -35.1L19.3 -36.1L17.7 -36.9L16.1 -37.6L14.6 -38.2L13.2 -38.7L11.8 -39.2L10.4 -39.6L9 -39.9L7.7 -40.2L6.4 -40.4L5 -40.6L3.7 -40.7L2.3 -40.8L0.9 -40.9L-0.5 -40.9L-2 -40.8L-3.6 -40.7L-5.2 -40.6L-6.9 -40.3L-8.7 -40L-10.7 -39.5L-12.7 -38.9L-14.8 -38.1L-17.1 -37.2L-19.5 -36L-22 -34.5L-24.5 -32.7L-27.1 -30.6L-29.7 -28.1L-32.3 -25.2L-34.6 -21.8L-36.7 -18L-38.5 -13.9L-39.8 -9.3L-40.4 -4.6L-40.3 0.3L-40.5 5.8L-39.4 11L-37.6 16.1L-35.1 21L-31.9 25.6L-28 29.8L-23.6 33.4L-18.7 36.4L-13.4 38.6L-7.8 40.1L-2.1 40.8L3.7 40.7L9.4 39.8L14.8 38.1L20 35.7L24.7 32.6L28.9 28.9L32.5 24.8L35.5 20.3L37.8 15.5L39.5 10.6L40.5 5.7L40.9 0.9L40.7 -3.8L40.1 -8.2L39 -12.3L37.6 -16.1L36 -19.5L34.2 -22.5Z" fill="#00330e"/><path d="M32.3 -25.2L30.3 -27.5L28.3 -29.5L26.4 -31.2L24.5 -32.7L22.7 -34L21 -35.1L19.3 -36.1L17.7 -36.9L16.1 -37.6L14.6 -38.2L13.2 -38.7L11.8 -39.2L10.4 -39.6L9 -39.9L7.7 -40.2L6.4 -40.4L5 -40.6L3.7 -40.7L2.3 -40.8L0.9 -40.9L-0.5 -40.9L-2 -40.8L-3.6 -40.7L-5.2 -40.6L-6.9 -40.3L-8.7 -40L-10.7 -39.5L-12.7 -38.9L-14.8 -38.1L-17.1 -37.2L-19.5 -36L-22 -34.5L-24.5 -32.7L-27.1 -30.6L-29.7 -28.1L-32.3 -25.2L-34.6 -21.8L-36.7 -18L-38.5 -13.9L-39.8 -9.3L-40.2 -4.7L-40 0.1L-40.1 5.5L-39.4 11L-37.6 16.1L-35.1 21L-31.9 25.6L-28 29.8L-23.6 33.4L-18.7 36.4L-13.4 38.6L-7.8 40.1L-2.1 40.5L3.7 40.5L9.4 39.8L14.8 38.1L20 35.7L24.7 32.6L28.9 28.9L32.5 24.8L35.5 20.3L37.8 15.5L39.2 10.4L40.4 5.7L40.9 0.9L40.7 -3.8L40.1 -8.2L39 -12.3L37.6 -16.1L36 -19.5L34.2 -22.5Z" fill="#00370f"/><path d="M32.3 -25.2L30.3 -27.5L28.3 -29.5L26.4 -31.2L24.5 -32.7L22.7 -34L21 -35.1L19.3 -36.1L17.7 -36.9L16.1 -37.6L14.6 -38.2L13.2 -38.7L11.8 -39.2L10.4 -39.6L9 -39.9L7.7 -40.2L6.4 -40.4L5 -40.6L3.7 -40.7L2.3 -40.8L0.9 -40.9L-0.5 -40.9L-2 -40.8L-3.6 -40.7L-5.2 -40.6L-6.9 -40.3L-8.7 -40L-10.7 -39.5L-12.7 -38.9L-14.8 -38.1L-17.1 -37.2L-19.5 -36L-22 -34.5L-24.5 -32.7L-27.1 -30.6L-29.7 -28.1L-32.3 -25.2L-34.6 -21.8L-36.7 -18L-38.5 -13.9L-39.7 -9.4L-40 -4.8L-39.7 -0.1L-39.1 4.8L-39.1 10.8L-37.6 16.1L-35.1 21L-31.9 25.6L-28 29.8L-23.6 33.4L-18.7 36.4L-13.4 38.6L-7.8 39.9L-2 40L3.7 39.9L9.3 39.6L14.8 38.1L20 35.7L24.7 32.6L28.9 28.9L32.5 24.8L35.5 20.2L37.5 15.2L39 10.2L40.3 5.6L40.9 0.9L40.7 -3.8L40.1 -8.2L39 -12.3L37.6 -16.1L36 -19.5L34.2 -22.5Z" fill="#003b11"/><path d="M32.3 -25.2L30.3 -27.5L28.3 -29.5L26.4 -31.2L24.5 -32.7L22.7 -34L21 -35.1L19.3 -36.1L17.7 -36.9L16.1 -37.6L14.6 -38.2L13.2 -38.7L11.8 -39.2L10.4 -39.6L9 -39.9L7.7 -40.2L6.4 -40.4L5 -40.6L3.7 -40.7L2.3 -40.8L0.9 -40.9L-0.5 -40.9L-2 -40.8L-3.6 -40.7L-5.2 -40.6L-6.9 -40.3L-8.7 -40L-10.7 -39.5L-12.7 -38.9L-14.8 -38.1L-17.1 -37.2L-19.5 -36L-22 -34.5L-24.5 -32.7L-27.1 -30.6L-29.7 -28.1L-32.3 -25.2L-34.6 -21.8L-36.7 -18L-38.5 -13.9L-39.5 -9.4L-39.7 -4.9L-39.4 -0.3L-38.4 4.3L-38.2 10L-37.3 15.8L-35 21L-31.9 25.6L-28 29.8L-23.6 33.4L-18.7 36.3L-13.3 38.4L-7.7 39.1L-1.9 39L3.7 38.8L9.3 38.9L14.8 37.7L19.9 35.5L24.7 32.5L28.9 28.8L32.4 24.6L35.1 19.8L36.8 14.3L38.8 10L40.2 5.5L40.8 0.8L40.7 -3.8L40.1 -8.2L39 -12.3L37.6 -16.1L36 -19.5L34.2 -22.5Z" fill="#003f12"/><path d="M32.3 -25.2L30.3 -27.5L28.3 -29.5L26.4 -31.2L24.5 -32.7L22.7 -34L21 -35.1L19.3 -36.1L17.7 -36.9L16.1 -37.6L14.6 -38.2L13.2 -38.7L11.8 -39.2L10.4 -39.6L9 -39.9L7.7 -40.2L6.4 -40.4L5 -40.6L3.7 -40.7L2.3 -40.8L0.9 -40.9L-0.5 -40.9L-2 -40.8L-3.6 -40.7L-5.2 -40.6L-6.9 -40.3L-8.7 -40L-10.7 -39.5L-12.7 -38.9L-14.8 -38.1L-17.1 -37.2L-19.5 -36L-22 -34.5L-24.5 -32.7L-27.1 -30.6L-29.7 -28.1L-32.3 -25.2L-34.6 -21.8L-36.7 -18L-38.4 -13.9L-39.3 -9.5L-39.3 -5.1L-39 -0.5L-38 4L-36.3 8.4L-36.4 14.9L-34.6 20.5L-31.7 25.4L-27.9 29.6L-23.5 33.1L-18.5 35.9L-13.1 37.5L-7.3 37.4L-1.8 37.5L3.7 37.2L9.1 37.2L14.6 36.8L19.8 34.9L24.5 32L28.6 28.2L31.9 23.8L34.2 18.4L36.5 13.9L38.6 9.8L40 5.3L40.6 0.7L40.7 -3.8L40.1 -8.2L39 -12.3L37.6 -16.1L36 -19.5L34.2 -22.5Z" fill="#004413"/><path d="M32.3 -25.2L30.3 -27.5L28.3 -29.5L26.4 -31.2L24.5 -32.7L22.7 -34L21 -35.1L19.3 -36.1L17.7 -36.9L16.1 -37.6L14.6 -38.2L13.2 -38.7L11.8 -39.2L10.4 -39.6L9 -39.9L7.7 -40.2L6.4 -40.4L5 -40.6L3.7 -40.7L2.3 -40.8L0.9 -40.9L-0.5 -40.9L-2 -40.8L-3.6 -40.7L-5.2 -40.6L-6.9 -40.3L-8.7 -40L-10.7 -39.5L-12.7 -38.9L-14.8 -38.1L-17.1 -37.2L-19.5 -36L-22 -34.5L-24.5 -32.7L-27.1 -30.6L-29.7 -28.1L-32.3 -25.2L-34.6 -21.8L-36.7 -18L-38.3 -13.9L-39 -9.6L-38.9 -5.3L-38.5 -0.8L-37.5 3.7L-35.8 8L-33.4 11.9L-33.6 19.2L-31.1 24.5L-27.5 28.9L-23.1 32.3L-18.1 34.7L-12.6 35.5L-6.8 34.1L-1.6 35.1L3.7 34.6L8.8 32.9L14.2 34.5L19.3 33.3L24 30.6L27.9 26.7L30.7 21.6L33.4 17.2L36.2 13.6L38.3 9.5L39.7 5.1L40.5 0.6L40.7 -3.8L40.1 -8.2L39 -12.3L37.6 -16.1L36 -19.5L34.2 -22.5Z" fill="#004814"/><path d="M32.3 -25.2L30.3 -27.5L28.3 -29.5L26.4 -31.2L24.5 -32.7L22.7 -34L21 -35.1L19.3 -36.1L17.7 -36.9L16.1 -37.6L14.6 -38.2L13.2 -38.7L11.8 -39.2L10.4 -39.6L9 -39.9L7.7 -40.2L6.4 -40.4L5 -40.6L3.7 -40.7L2.3 -40.8L0.9 -40.9L-0.5 -40.9L-2 -40.8L-3.6 -40.7L-5.2 -40.6L-6.9 -40.3L-8.7 -40L-10.7 -39.5L-12.7 -38.9L-14.8 -38.1L-17.1 -37.2L-19.5 -36L-22 -34.5L-24.5 -32.7L-27.1 -30.6L-29.7 -28.1L-32.3 -25.2L-34.6 -21.8L-36.6 -18L-38.1 -14L-38.7 -9.7L-38.5 -5.5L-38.1 -1.1L-37 3.3L-35.2 7.5L-32.8 11.4L-29.8 14.8L-29.3 22L-26.4 26.9L-22.1 30.2L-17 31.6L-9.6 24.4L-5.8 28.6L-1.1 30.1L3.7 28.7L8.2 26L12.6 25.5L17.1 25.1L22.1 25.4L25.8 22.2L29.6 19.8L33 16.7L35.8 13.2L38 9.2L39.5 4.9L40.3 0.5L40.6 -3.9L40.1 -8.2L39 -12.3L37.6 -16.1L36 -19.5L34.2 -22.5Z" fill="#004c15"/><path d="M32.3 -25.2L30.3 -27.5L28.3 -29.5L26.4 -31.2L24.5 -32.7L22.7 -34L21 -35.1L19.3 -36.1L17.7 -36.9L16.1 -37.6L14.6 -38.2L13.2 -38.7L11.8 -39.2L10.4 -39.6L9 -39.9L7.7 -40.2L6.4 -40.4L5 -40.6L3.7 -40.7L2.3 -40.8L0.9 -40.9L-0.5 -40.9L-2 -40.8L-3.6 -40.7L-5.2 -40.6L-6.9 -40.3L-8.7 -40L-10.7 -39.5L-12.7 -38.9L-14.8 -38.1L-17.1 -37.2L-19.5 -36L-22 -34.5L-24.5 -32.7L-27.1 -30.6L-29.7 -28.1L-32.3 -25.2L-34.6 -21.8L-36.5 -18.1L-37.8 -14L-38.3 -9.9L-38 -5.7L-37.5 -1.4L-36.4 2.9L-34.6 7L-32.2 10.8L-29.3 14.1L-25.8 17L-22 19.3L-17.9 21.1L-13.6 22.2L-9.3 23.4L-5.1 24.6L-0.7 25.3L3.7 25.4L8.1 25.1L12.4 24.5L16.9 24.1L21.2 23.1L25.4 21.4L29.2 19.1L32.6 16.2L35.5 12.7L37.7 8.8L39.2 4.6L40 0.3L40.4 -3.9L40 -8.2L39 -12.3L37.6 -16.1L36 -19.5L34.2 -22.5Z" fill="#005117"/><path d="M32.3 -25.2L30.3 -27.5L28.3 -29.5L26.4 -31.2L24.5 -32.7L22.7 -34L21 -35.1L19.3 -36.1L17.7 -36.9L16.1 -37.6L14.6 -38.2L13.2 -38.7L11.8 -39.2L10.4 -39.6L9 -39.9L7.7 -40.2L6.4 -40.4L5 -40.6L3.7 -40.7L2.3 -40.8L0.9 -40.9L-0.5 -40.9L-2 -40.8L-3.6 -40.7L-5.2 -40.6L-6.9 -40.3L-8.7 -40L-10.7 -39.5L-12.7 -38.9L-14.8 -38.1L-17.1 -37.2L-19.5 -36L-22 -34.5L-24.5 -32.7L-27.1 -30.6L-29.7 -28.1L-32.3 -25.2L-34.5 -21.8L-36.3 -18.1L-37.5 -14.1L-37.9 -10L-37.4 -6L-36.9 -1.7L-35.8 2.5L-34 6.5L-31.6 10.1L-28.7 13.4L-25.2 16.1L-21.5 18.4L-17.4 20.1L-13.2 21.2L-9.1 22.5L-4.9 23.6L-0.6 24.3L3.7 24.4L8 24.1L12.3 23.5L16.6 23.1L20.9 22.2L25 20.6L28.8 18.4L32.2 15.6L35 12.2L37.3 8.4L38.8 4.3L39.7 0.1L40.2 -4.1L40 -8.2L39 -12.3L37.6 -16.1L36 -19.5L34.2 -22.5Z" fill="#005518"/><path d="M32.3 -25.2L30.3 -27.5L28.3 -29.5L26.4 -31.2L24.5 -32.7L22.7 -34L21 -35.1L19.3 -36.1L17.7 -36.9L16.1 -37.6L14.6 -38.2L13.2 -38.7L11.8 -39.2L10.4 -39.6L9 -39.9L7.7 -40.2L6.4 -40.4L5 -40.6L3.7 -40.7L2.3 -40.8L0.9 -40.9L-0.5 -40.9L-2 -40.8L-3.6 -40.7L-5.2 -40.6L-6.9 -40.3L-8.7 -40L-10.7 -39.5L-12.7 -38.9L-14.8 -38.1L-17.1 -37.2L-19.5 -36L-22 -34.5L-24.5 -32.7L-27.1 -30.6L-29.7 -28.1L-32.2 -25.2L-34.4 -21.8L-36.1 -18.1L-37.1 -14.2L-37.4 -10.2L-36.8 -6.3L-36.3 -2.1L-35.1 2L-33.3 5.9L-30.9 9.5L-28 12.6L-24.6 15.3L-20.9 17.4L-16.9 19L-12.8 20L-8.8 21.4L-4.7 22.6L-0.6 23.2L3.7 23.4L7.9 23.1L12.1 22.3L16.3 22.1L20.6 21.2L24.6 19.8L28.4 17.6L31.7 14.9L34.6 11.7L36.8 8L38.4 4L39.3 -0.2L39.9 -4.2L39.8 -8.3L39 -12.3L37.6 -16.1L36 -19.5L34.2 -22.5Z" fill="#005919"/><path d="M32.3 -25.2L30.3 -27.5L28.3 -29.5L26.4 -31.2L24.5 -32.7L22.7 -34L21 -35.1L19.3 -36.1L17.7 -36.9L16.1 -37.6L14.6 -38.2L13.2 -38.7L11.8 -39.2L10.4 -39.6L9 -39.9L7.7 -40.2L6.4 -40.4L5 -40.6L3.7 -40.7L2.3 -40.8L0.9 -40.9L-0.5 -40.9L-2 -40.8L-3.6 -40.7L-5.2 -40.6L-6.9 -40.3L-8.7 -40L-10.7 -39.5L-12.7 -38.9L-14.8 -38.1L-17.1 -37.2L-19.5 -36L-22 -34.5L-24.5 -32.7L-27.1 -30.6L-29.7 -28.1L-32.1 -25.2L-34.2 -21.8L-35.8 -18.2L-36.6 -14.3L-36.8 -10.4L-36.1 -6.6L-35.6 -2.5L-34.4 1.5L-32.6 5.3L-30.2 8.7L-27.3 11.8L-24 14.3L-20.3 16.4L-16.4 17.9L-12.3 18.9L-8.5 20.4L-4.5 21.5L-0.5 22.1L3.7 22.3L7.8 22L11.9 21.2L16 21L20.2 20.2L24.2 18.8L27.9 16.8L31.3 14.2L34.1 11.1L36.4 7.5L38 3.6L38.9 -0.5L39.6 -4.4L39.6 -8.4L38.9 -12.3L37.6 -16.1L36 -19.5L34.2 -22.5Z" fill="#005e1a"/><path d="M32.3 -25.2L30.3 -27.5L28.3 -29.5L26.4 -31.2L24.5 -32.7L22.7 -34L21 -35.1L19.3 -36.1L17.7 -36.9L16.1 -37.6L14.6 -38.2L13.2 -38.7L11.8 -39.2L10.4 -39.6L9 -39.9L7.7 -40.2L6.4 -40.4L5 -40.6L3.7 -40.7L2.3 -40.8L0.9 -40.9L-0.5 -40.9L-2 -40.8L-3.6 -40.7L-5.2 -40.6L-6.9 -40.3L-8.7 -40L-10.7 -39.5L-12.7 -38.9L-14.8 -38.1L-17.1 -37.2L-19.5 -36L-22 -34.5L-24.5 -32.7L-27.1 -30.6L-29.7 -28.1L-32 -25.2L-33.9 -21.9L-35.4 -18.3L-36.1 -14.5L-36.1 -10.7L-35.4 -6.9L-34.8 -2.9L-33.6 1L-31.8 4.6L-29.4 8L-26.6 10.9L-23.3 13.3L-19.7 15.3L-15.8 16.7L-11.9 17.8L-8.2 19.3L-4.3 20.3L-0.4 21L3.7 21.1L7.7 20.8L11.7 20.1L15.7 19.8L19.8 19.1L23.7 17.9L27.4 16L30.7 13.5L33.6 10.5L35.8 7L37.5 3.2L38.5 -0.8L39.2 -4.6L39.4 -8.5L38.8 -12.4L37.6 -16.1L36 -19.5L34.2 -22.5Z" fill="#00621b"/><path d="M32.3 -25.2L30.3 -27.5L28.3 -29.5L26.4 -31.2L24.5 -32.7L22.7 -34L21 -35.1L19.3 -36.1L17.7 -36.9L16.1 -37.6L14.6 -38.2L13.2 -38.7L11.8 -39.2L10.4 -39.6L9 -39.9L7.7 -40.2L6.4 -40.4L5 -40.6L3.7 -40.7L2.3 -40.8L0.9 -40.9L-0.5 -40.9L-2 -40.8L-3.6 -40.7L-5.2 -40.6L-6.9 -40.3L-8.7 -40L-10.7 -39.5L-12.7 -38.9L-14.8 -38.1L-17.1 -37.2L-19.5 -36L-22 -34.5L-24.5 -32.7L-27.1 -30.6L-29.6 -28.1L-31.8 -25.2L-33.6 -21.9L-34.9 -18.4L-35.5 -14.6L-35.4 -10.9L-34.6 -7.3L-34 -3.4L-32.8 0.4L-31 3.9L-28.6 7.1L-25.8 9.9L-22.5 12.3L-19 14.1L-15.2 15.4L-11.5 16.6L-7.9 18.1L-4.1 19.2L-0.2 19.8L3.7 19.9L7.6 19.7L11.5 18.9L15.4 18.6L19.4 18L23.3 16.8L26.9 15L30.2 12.7L33 9.8L35.2 6.4L36.9 2.7L37.9 -1.2L38.8 -4.9L39 -8.7L38.6 -12.5L37.5 -16.1L36 -19.5L34.2 -22.5Z" fill="#00661d"/><path d="M32.3 -25.2L30.3 -27.5L28.3 -29.5L26.4 -31.2L24.5 -32.7L22.7 -34L21 -35.1L19.3 -36.1L17.7 -36.9L16.1 -37.6L14.6 -38.2L13.2 -38.7L11.8 -39.2L10.4 -39.6L9 -39.9L7.7 -40.2L6.4 -40.4L5 -40.6L3.7 -40.7L2.3 -40.8L0.9 -40.9L-0.5 -40.9L-2 -40.8L-3.6 -40.7L-5.2 -40.6L-6.9 -40.3L-8.7 -40L-10.7 -39.5L-12.7 -38.9L-14.8 -38.1L-17.1 -37.2L-19.5 -36L-22 -34.5L-24.5 -32.7L-27 -30.6L-29.4 -28L-31.5 -25.2L-33.2 -21.9L-34.4 -18.4L-34.9 -14.8L-34.7 -11.2L-33.7 -7.7L-33 -4L-31.8 -0.3L-30 3.1L-27.7 6.2L-24.9 8.9L-21.7 11.1L-18.3 12.9L-14.6 14.1L-11.1 15.5L-7.6 16.9L-3.9 17.9L-0.1 18.5L3.7 18.7L7.5 18.4L11.2 17.7L15.1 17.3L18.9 16.8L22.7 15.7L26.3 14L29.5 11.8L32.3 9L34.6 5.8L36.3 2.2L37.3 -1.6L38.3 -5.2L38.6 -8.9L38.3 -12.6L37.3 -16.1L35.9 -19.5L34.2 -22.5Z" fill="#006b1e"/><path d="M32.3 -25.2L30.3 -27.5L28.3 -29.5L26.4 -31.2L24.5 -32.7L22.7 -34L21 -35.1L19.3 -36.1L17.7 -36.9L16.1 -37.6L14.6 -38.2L13.2 -38.7L11.8 -39.2L10.4 -39.6L9 -39.9L7.7 -40.2L6.4 -40.4L5 -40.6L3.7 -40.7L2.3 -40.8L0.9 -40.9L-0.5 -40.9L-2 -40.8L-3.6 -40.7L-5.2 -40.6L-6.9 -40.3L-8.7 -40L-10.7 -39.5L-12.7 -38.9L-14.8 -38.1L-17.1 -37.1L-19.5 -35.9L-21.9 -34.5L-24.4 -32.7L-26.8 -30.5L-29.1 -28L-31.1 -25.2L-32.7 -22L-33.7 -18.6L-34.1 -15L-33.8 -11.5L-32.8 -8.2L-32 -4.5L-30.8 -1L-29 2.3L-26.7 5.3L-24 7.8L-20.9 9.9L-17.5 11.5L-14 12.7L-10.6 14.2L-7.2 15.6L-3.7 16.6L0 17.2L3.7 17.4L7.4 17.1L11 16.4L14.7 15.9L18.5 15.5L22.2 14.5L25.7 13L28.9 10.8L31.7 8.2L33.9 5.1L35.6 1.6L36.7 -2L37.7 -5.5L38.2 -9.1L37.9 -12.7L37.1 -16.2L35.8 -19.5L34.1 -22.5Z" fill="#006f1f"/><path d="M32.2 -25.2L30.3 -27.5L28.3 -29.5L26.4 -31.2L24.5 -32.7L22.7 -34L21 -35.1L19.3 -36.1L17.7 -36.9L16.1 -37.6L14.6 -38.2L13.2 -38.7L11.8 -39.2L10.4 -39.6L9 -39.9L7.7 -40.2L6.4 -40.4L5 -40.6L3.7 -40.7L2.3 -40.8L0.9 -40.8L-0.5 -40.8L-2 -40.8L-3.6 -40.7L-5.2 -40.5L-6.9 -40.3L-8.7 -39.9L-10.6 -39.5L-12.7 -38.9L-14.8 -38.1L-17 -37.1L-19.4 -35.9L-21.8 -34.4L-24.2 -32.6L-26.5 -30.5L-28.7 -28L-30.6 -25.2L-32.1 -22L-33 -18.7L-33.3 -15.2L-32.9 -11.9L-31.8 -8.6L-30.9 -5.2L-29.7 -1.8L-28 1.4L-25.7 4.2L-23 6.6L-20 8.6L-16.7 10.1L-13.3 11.2L-10.2 12.9L-6.9 14.3L-3.4 15.2L0.1 15.8L3.7 16L7.3 15.7L10.8 15.1L14.3 14.4L18 14.1L21.6 13.2L25 11.8L28.2 9.8L30.9 7.3L33.2 4.3L34.9 1L36 -2.6L37.1 -5.9L37.6 -9.3L37.5 -12.8L36.8 -16.3L35.6 -19.5L34 -22.5Z" fill="#007320"/><path d="M32.1 -25.2L30.2 -27.5L28.3 -29.5L26.4 -31.2L24.5 -32.7L22.7 -34L21 -35.1L19.3 -36.1L17.7 -36.9L16.1 -37.6L14.6 -38.2L13.2 -38.7L11.8 -39.2L10.4 -39.6L9 -39.9L7.7 -40.2L6.4 -40.4L5 -40.6L3.7 -40.7L2.3 -40.7L0.9 -40.8L-0.5 -40.7L-2 -40.7L-3.5 -40.6L-5.2 -40.5L-6.9 -40.2L-8.7 -39.9L-10.6 -39.4L-12.6 -38.8L-14.7 -38L-16.9 -37L-19.2 -35.8L-21.6 -34.3L-23.9 -32.6L-26.2 -30.4L-28.3 -28L-30.1 -25.2L-31.4 -22.1L-32.2 -18.8L-32.4 -15.5L-31.8 -12.2L-30.6 -9.1L-29.7 -5.9L-28.5 -2.6L-26.8 0.4L-24.6 3.1L-21.9 5.4L-19 7.2L-15.8 8.6L-12.7 9.9L-9.7 11.5L-6.5 12.8L-3.2 13.8L0.2 14.4L3.7 14.5L7.1 14.3L10.5 13.7L13.9 12.8L17.4 12.6L20.9 11.9L24.3 10.6L27.4 8.7L30.1 6.3L32.3 3.5L34 0.3L35.1 -3.1L36.3 -6.3L37 -9.6L37 -13L36.4 -16.4L35.3 -19.6L33.8 -22.5Z" fill="#007821"/><path d="M31.9 -25.2L30.1 -27.5L28.2 -29.5L26.3 -31.2L24.5 -32.7L22.7 -34L20.9 -35.1L19.3 -36.1L17.7 -36.9L16.1 -37.6L14.6 -38.2L13.2 -38.7L11.8 -39.1L10.4 -39.5L9 -39.8L7.7 -40.1L6.4 -40.3L5 -40.5L3.7 -40.6L2.3 -40.6L1 -40.6L-0.5 -40.6L-1.9 -40.5L-3.5 -40.5L-5.1 -40.3L-6.8 -40.1L-8.6 -39.7L-10.4 -39.3L-12.4 -38.7L-14.5 -37.9L-16.7 -36.9L-19 -35.7L-21.3 -34.2L-23.6 -32.5L-25.8 -30.3L-27.7 -27.9L-29.4 -25.2L-30.6 -22.2L-31.3 -19L-31.3 -15.8L-30.7 -12.6L-29.4 -9.7L-28.3 -6.7L-27.2 -3.5L-25.5 -0.7L-23.3 1.8L-20.8 4L-17.9 5.7L-14.8 6.9L-12 8.5L-9.1 10.1L-6.1 11.3L-2.9 12.3L0.4 12.8L3.7 13L7 12.8L10.3 12.2L13.4 11.2L16.9 11L20.3 10.4L23.5 9.2L26.5 7.5L29.2 5.3L31.4 2.6L33.1 -0.5L34.2 -3.8L35.5 -6.8L36.3 -9.9L36.4 -13.2L36 -16.5L34.9 -19.6L33.6 -22.5Z" fill="#007c22"/><path d="M31.6 -25.2L29.9 -27.4L28.1 -29.5L26.2 -31.2L24.4 -32.7L22.6 -34L20.9 -35.1L19.2 -36L17.6 -36.8L16.1 -37.5L14.6 -38.1L13.1 -38.6L11.7 -39.1L10.3 -39.4L9 -39.7L7.7 -40L6.3 -40.2L5 -40.3L3.7 -40.4L2.3 -40.4L1 -40.4L-0.4 -40.4L-1.8 -40.3L-3.4 -40.2L-4.9 -40.1L-6.6 -39.9L-8.4 -39.6L-10.3 -39.1L-12.2 -38.5L-14.3 -37.7L-16.5 -36.8L-18.7 -35.6L-20.9 -34.1L-23.1 -32.3L-25.2 -30.2L-27.1 -27.8L-28.6 -25.2L-29.7 -22.2L-30.3 -19.2L-30.2 -16.1L-29.4 -13.1L-28.1 -10.3L-26.8 -7.5L-25.7 -4.6L-24 -1.9L-22 0.5L-19.5 2.5L-16.7 4L-13.8 5.1L-11.3 7L-8.6 8.5L-5.7 9.7L-2.6 10.6L0.5 11.2L3.7 11.3L6.9 11.1L10 10.6L13 9.6L16.2 9.3L19.5 8.8L22.7 7.7L25.6 6.2L28.2 4.1L30.4 1.6L32.1 -1.3L33.2 -4.5L34.7 -7.3L35.5 -10.3L35.8 -13.5L35.4 -16.7L34.5 -19.7L33.2 -22.6Z" fill="#008024"/><path d="M31.3 -25.2L29.6 -27.4L27.9 -29.4L26 -31.1L24.2 -32.6L22.5 -33.9L20.8 -35L19.1 -36L17.5 -36.8L16 -37.4L14.5 -38L13 -38.5L11.6 -38.9L10.3 -39.3L8.9 -39.6L7.6 -39.8L6.3 -40L5 -40.1L3.7 -40.1L2.4 -40.1L1 -40.2L-0.3 -40.1L-1.7 -40.1L-3.2 -39.9L-4.8 -39.8L-6.4 -39.6L-8.2 -39.3L-10 -38.9L-12 -38.3L-14 -37.5L-16.1 -36.6L-18.3 -35.4L-20.4 -33.9L-22.6 -32.2L-24.6 -30.1L-26.3 -27.8L-27.7 -25.2L-28.7 -22.3L-29.1 -19.4L-28.9 -16.4L-28.1 -13.6L-26.7 -11L-25.1 -8.5L-24 -5.8L-22.4 -3.2L-20.4 -1L-18.1 0.8L-15.4 2.1L-12.9 3.6L-10.6 5.4L-8 6.9L-5.2 8L-2.3 8.9L0.7 9.4L3.7 9.6L6.7 9.4L9.7 8.8L12.5 7.9L15.5 7.4L18.7 7L21.7 6.1L24.6 4.7L27.1 2.8L29.3 0.4L30.9 -2.3L32.1 -5.3L33.7 -7.8L34.6 -10.7L35 -13.8L34.7 -16.8L34 -19.8L32.8 -22.6Z" fill="#008525"/><path d="M30.8 -25.2L29.2 -27.4L27.5 -29.4L25.8 -31.1L24 -32.6L22.3 -33.8L20.6 -34.9L18.9 -35.8L17.4 -36.6L15.8 -37.3L14.4 -37.9L12.9 -38.3L11.5 -38.7L10.2 -39.1L8.8 -39.3L7.5 -39.5L6.2 -39.7L5 -39.7L3.7 -39.8L2.4 -39.8L1.1 -39.8L-0.2 -39.8L-1.6 -39.7L-3 -39.6L-4.6 -39.4L-6.2 -39.2L-7.9 -38.9L-9.7 -38.5L-11.6 -38L-13.6 -37.2L-15.6 -36.3L-17.7 -35.1L-19.8 -33.7L-21.9 -32L-23.8 -30L-25.4 -27.7L-26.7 -25.2L-27.5 -22.4L-27.8 -19.6L-27.5 -16.8L-26.5 -14.2L-25.1 -11.7L-23.2 -9.6L-22.1 -7.1L-20.6 -4.8L-18.7 -2.8L-16.4 -1.2L-14 0L-12 2L-9.7 3.6L-7.3 5.1L-4.7 6.2L-2 7L0.8 7.5L3.7 7.7L6.5 7.5L9.3 7L12.1 6.1L14.8 5.3L17.8 5.1L20.7 4.3L23.5 3.1L25.9 1.4L28 -0.8L29.6 -3.4L30.9 -6.1L32.6 -8.5L33.6 -11.2L34.1 -14.1L34 -17L33.3 -19.9L32.2 -22.7Z" fill="#008926"/><path d="M30.3 -25.2L28.7 -27.3L27.1 -29.3L25.4 -31L23.7 -32.4L22 -33.7L20.3 -34.8L18.7 -35.7L17.1 -36.4L15.6 -37.1L14.2 -37.6L12.7 -38.1L11.4 -38.5L10 -38.8L8.7 -39L7.4 -39.2L6.2 -39.3L4.9 -39.3L3.7 -39.3L2.4 -39.4L1.2 -39.4L-0.1 -39.4L-1.5 -39.3L-2.8 -39.2L-4.3 -38.9L-5.8 -38.8L-7.5 -38.5L-9.3 -38.1L-11.1 -37.6L-13.1 -36.9L-15.1 -36L-17.1 -34.8L-19.1 -33.4L-21 -31.8L-22.8 -29.8L-24.3 -27.6L-25.5 -25.2L-26.2 -22.5L-26.3 -19.9L-25.8 -17.2L-24.8 -14.8L-23.3 -12.6L-21.4 -10.7L-19.9 -8.7L-18.4 -6.6L-16.6 -4.8L-14.5 -3.5L-12.8 -1.7L-10.9 0.2L-8.9 1.8L-6.6 3.1L-4.2 4.2L-1.6 5L1 5.5L3.7 5.6L6.4 5.5L9 5L11.5 4.1L13.9 3L16.8 2.9L19.5 2.3L22.2 1.3L24.6 -0.3L26.6 -2.3L28.1 -4.6L29.7 -7L31.4 -9.2L32.5 -11.7L33.1 -14.5L33.1 -17.3L32.5 -20.1L31.5 -22.7Z" fill="#008d27"/><path d="M29.5 -25.2L28.1 -27.3L26.6 -29.2L24.9 -30.8L23.2 -32.3L21.6 -33.5L19.9 -34.5L18.4 -35.4L16.8 -36.2L15.3 -36.8L13.9 -37.3L12.5 -37.8L11.2 -38.1L9.8 -38.4L8.6 -38.6L7.3 -38.7L6.1 -38.8L4.9 -38.8L3.7 -38.8L2.5 -38.9L1.3 -38.9L0 -38.9L-1.3 -38.8L-2.6 -38.6L-4 -38.4L-5.4 -38.1L-7 -37.9L-8.7 -37.6L-10.5 -37.1L-12.4 -36.4L-14.3 -35.5L-16.3 -34.5L-18.2 -33.1L-20 -31.5L-21.7 -29.6L-23 -27.5L-24 -25.2L-24.6 -22.7L-24.6 -20.2L-24 -17.7L-22.9 -15.5L-21.3 -13.5L-19.4 -11.8L-17.2 -10.5L-15.7 -8.9L-14.1 -7.4L-12.8 -5.5L-11.4 -3.6L-9.8 -1.9L-7.9 -0.3L-5.8 1L-3.6 2L-1.2 2.7L1.2 3.2L3.7 3.3L6.2 3.2L8.6 2.7L10.9 1.9L13.1 0.9L15.6 0.4L18.2 0L20.7 -0.9L22.9 -2.2L24.9 -4L26.4 -6.1L28.2 -8L30 -10L31.2 -12.3L31.9 -14.9L32 -17.6L31.6 -20.2L30.7 -22.8Z" fill="#009228"/><path d="M28.7 -25.2L27.3 -27.2L25.9 -29.1L24.3 -30.7L22.7 -32.1L21.1 -33.3L19.5 -34.3L17.9 -35.1L16.4 -35.8L15 -36.4L13.5 -36.9L12.2 -37.3L10.9 -37.6L9.6 -37.8L8.4 -38L7.1 -38.1L6 -38.1L4.8 -38.1L3.7 -38.2L2.5 -38.3L1.4 -38.3L0.2 -38.3L-1.1 -38.2L-2.3 -38L-3.6 -37.8L-4.9 -37.5L-6.4 -37.2L-8 -36.9L-9.7 -36.4L-11.5 -35.8L-13.4 -35L-15.2 -34L-17 -32.7L-18.7 -31.2L-20.3 -29.4L-21.5 -27.4L-22.3 -25.2L-22.7 -22.8L-22.5 -20.5L-21.9 -18.3L-20.7 -16.3L-19.1 -14.6L-17.1 -13.1L-15 -12.1L-13 -11.1L-12 -9.5L-11.1 -7.6L-9.9 -5.8L-8.4 -4.1L-6.8 -2.7L-4.9 -1.5L-2.9 -0.5L-0.8 0.2L1.4 0.6L3.7 0.8L5.9 0.6L8.1 0.2L10.3 -0.6L12.3 -1.6L14.1 -2.8L16.6 -2.9L18.9 -3.4L21 -4.5L22.8 -6L24.5 -7.7L26.6 -9.1L28.4 -10.9L29.7 -13L30.5 -15.4L30.8 -17.9L30.5 -20.4L29.7 -22.9Z" fill="#009629"/><path d="M27.6 -25.2L26.4 -27.1L25 -28.9L23.5 -30.5L21.9 -31.8L20.4 -32.9L18.8 -33.9L17.3 -34.7L15.9 -35.4L14.5 -35.9L13.1 -36.4L11.8 -36.7L10.5 -37L9.3 -37.1L8.1 -37.2L6.9 -37.3L5.8 -37.2L4.8 -37.4L3.7 -37.5L2.6 -37.5L1.5 -37.6L0.4 -37.5L-0.8 -37.4L-2 -37.3L-3.2 -37L-4.4 -36.7L-5.7 -36.3L-7.1 -35.9L-8.7 -35.5L-10.4 -35L-12.1 -34.3L-13.9 -33.3L-15.6 -32.2L-17.1 -30.7L-18.5 -29.1L-19.6 -27.2L-20.2 -25.2L-20.4 -23L-20.1 -21L-19.3 -19L-18 -17.3L-16.3 -15.8L-14.4 -14.7L-12.7 -13.7L-11.5 -12.4L-10.2 -11.3L-9 -10.1L-8.1 -8.4L-6.9 -6.9L-5.5 -5.5L-3.9 -4.4L-2.1 -3.5L-0.3 -2.8L1.7 -2.4L3.7 -2.3L5.7 -2.4L7.6 -2.8L9.5 -3.5L11.2 -4.5L12.8 -5.7L14.3 -6.7L16.4 -6.9L18.4 -7.6L20.3 -8.5L22.7 -9.2L24.8 -10.4L26.6 -11.9L28 -13.8L28.9 -16L29.3 -18.3L29.1 -20.7L28.5 -23Z" fill="#009a2b"/><path d="M26.2 -25.2L25.2 -27L23.9 -28.7L22.5 -30.2L21 -31.5L19.5 -32.5L18 -33.4L16.6 -34.2L15.1 -34.8L13.8 -35.3L12.5 -35.6L11.2 -35.9L10 -36.1L8.8 -36.2L7.7 -36.2L6.6 -36.2L5.7 -36.3L4.7 -36.5L3.7 -36.6L2.7 -36.6L1.7 -36.6L0.6 -36.6L-0.4 -36.5L-1.5 -36.3L-2.6 -36.1L-3.8 -35.8L-5 -35.4L-6.1 -35L-7.3 -34.4L-8.8 -33.9L-10.4 -33.3L-12 -32.5L-13.6 -31.4L-15 -30.2L-16.2 -28.7L-17 -27L-17.5 -25.2L-17.5 -23.3L-17 -21.5L-16 -19.9L-14.6 -18.5L-12.8 -17.5L-11.9 -16.2L-10.9 -15L-9.8 -13.9L-8.6 -12.9L-7.4 -12L-6.1 -11.2L-4.8 -10.5L-3.7 -9.2L-2.5 -8.1L-1.1 -7.3L0.4 -6.6L2 -6.3L3.7 -6.1L5.3 -6.3L6.9 -6.7L8.4 -7.4L9.8 -8.3L11 -9.5L12.4 -10.1L13.9 -10.5L16.1 -10.4L18.3 -10.5L20.5 -11L22.6 -11.9L24.5 -13.1L26 -14.7L27 -16.7L27.5 -18.8L27.5 -21L27.1 -23.1Z" fill="#009f2c"/><path d="M24.5 -25.2L23.6 -26.9L22.4 -28.5L21.1 -29.8L19.7 -31L18.3 -32L16.9 -32.8L15.5 -33.4L14.1 -33.9L12.8 -34.3L11.6 -34.6L10.4 -34.8L9.3 -34.8L8.2 -34.8L7.2 -34.8L6.3 -35L5.5 -35.2L4.6 -35.3L3.7 -35.4L2.8 -35.4L1.9 -35.4L0.9 -35.4L0 -35.3L-1 -35.2L-2 -35L-3 -34.7L-4 -34.3L-5.1 -33.9L-6.1 -33.4L-7.1 -32.7L-8.1 -32L-9.1 -31.1L-10.5 -30.3L-11.7 -29.3L-12.7 -28L-13.3 -26.6L-13.5 -25.2L-13.1 -23.7L-12.3 -22.3L-11.6 -21.1L-11.1 -19.8L-10.5 -18.6L-9.7 -17.4L-8.8 -16.4L-7.9 -15.5L-6.9 -14.6L-5.8 -13.9L-4.7 -13.2L-3.5 -12.7L-2.4 -12.2L-1.2 -11.8L0 -11.5L1.2 -11.2L2.4 -11.1L3.7 -11L4.9 -11L6.2 -11L7.4 -11.2L8.7 -11.4L9.9 -11.8L11.1 -12.2L12.4 -12.8L13.7 -13.2L15.8 -13L17.9 -13.2L20 -13.7L21.9 -14.6L23.5 -15.9L24.6 -17.5L25.3 -19.4L25.5 -21.3L25.2 -23.3Z" fill="#00a32d"/><path d="M22.1 -25.2L21.3 -26.7L20.3 -28.1L19.1 -29.3L17.8 -30.3L16.5 -31.1L15.2 -31.8L13.9 -32.3L12.6 -32.6L11.4 -32.8L10.2 -32.9L9.1 -32.9L8.2 -32.9L7.4 -33.2L6.7 -33.4L5.9 -33.5L5.2 -33.7L4.4 -33.8L3.7 -33.9L2.9 -33.9L2.1 -33.9L1.4 -33.8L0.5 -33.8L-0.3 -33.6L-1.1 -33.4L-2 -33.2L-2.8 -32.9L-3.7 -32.5L-4.5 -32.1L-5.4 -31.5L-6.2 -30.9L-7 -30.1L-7.6 -29.3L-8.2 -28.3L-8.7 -27.3L-9 -26.3L-9.2 -25.2L-9.2 -24L-9.1 -22.9L-8.8 -21.8L-8.3 -20.8L-7.8 -19.8L-7.1 -18.9L-6.4 -18.1L-5.6 -17.3L-4.8 -16.7L-3.9 -16.1L-3 -15.6L-2.1 -15.1L-1.2 -14.7L-0.2 -14.4L0.7 -14.2L1.7 -14L2.7 -13.9L3.7 -13.8L4.7 -13.8L5.7 -13.8L6.7 -13.9L7.7 -14.1L8.7 -14.4L9.7 -14.7L10.7 -15.2L11.6 -15.7L12.5 -16.3L14.2 -16.3L16.3 -16.3L18.3 -16.7L20 -17.5L21.4 -18.7L22.3 -20.2L22.7 -21.8L22.6 -23.5Z" fill="#00a72e"/><path d="M18 -25.2L17.5 -26.4L16.6 -27.4L15.5 -28.3L14.3 -29L12.9 -29.4L11.4 -29.6L9.7 -29.4L9.2 -29.7L8.6 -30.1L8.1 -30.4L7.5 -30.6L7 -30.9L6.4 -31.1L5.9 -31.2L5.3 -31.4L4.8 -31.5L4.2 -31.5L3.7 -31.6L3.1 -31.6L2.5 -31.6L2 -31.6L1.4 -31.5L0.8 -31.4L0.2 -31.3L-0.5 -31.1L-1.1 -30.8L-1.7 -30.5L-2.3 -30.2L-2.9 -29.8L-3.5 -29.3L-4 -28.7L-4.5 -28.1L-4.9 -27.4L-5.2 -26.7L-5.4 -25.9L-5.5 -25.2L-5.4 -24.4L-5.3 -23.6L-5.1 -22.8L-4.7 -22.1L-4.3 -21.4L-3.9 -20.8L-3.3 -20.2L-2.8 -19.7L-2.2 -19.3L-1.6 -18.9L-1 -18.5L-0.3 -18.2L0.3 -18L1 -17.7L1.7 -17.6L2.3 -17.4L3 -17.4L3.7 -17.3L4.4 -17.3L5.1 -17.3L5.8 -17.4L6.5 -17.5L7.2 -17.7L7.9 -17.9L8.5 -18.2L9.2 -18.6L9.9 -19L10.5 -19.5L11 -20L11.5 -20.6L11.9 -21.3L15.2 -21L16.9 -21.6L17.8 -22.7L18.2 -23.9Z" fill="#00ac2f"/></g><g id="sO"><circle r="13.9" fill="#370303"/><path d="M11 -8.5L9.6 -10L8.3 -11.1L7.1 -11.9L6 -12.5L5 -13L4 -13.3L3.1 -13.6L2.2 -13.7L1.3 -13.8L0.3 -13.9L-0.7 -13.9L-1.8 -13.8L-3 -13.6L-4.3 -13.2L-5.8 -12.6L-7.5 -11.7L-9.2 -10.4L-11 -8.5L-12.5 -6.1L-13.5 -3.2L-13.8 0.1L-13.4 3.7L-11.9 7.1L-9.5 10.1L-6.4 12.4L-2.7 13.6L1.3 13.8L5 13L8.4 11.1L11.1 8.4L12.9 5.3L13.8 1.9L13.8 -1.3L13.3 -4.2L12.2 -6.6Z" fill="#460403"/><path d="M11 -8.5L9.6 -10L8.3 -11.1L7.1 -11.9L6 -12.5L5 -13L4 -13.3L3.1 -13.6L2.2 -13.7L1.3 -13.8L0.3 -13.9L-0.7 -13.9L-1.8 -13.8L-3 -13.6L-4.3 -13.2L-5.8 -12.6L-7.5 -11.7L-9.2 -10.4L-11 -8.5L-12.5 -6.1L-13.5 -3.2L-13.5 0L-13.3 3.7L-11.9 7.1L-9.5 10.1L-6.4 12.4L-2.7 13.6L1.3 13.7L5 13L8.4 11.1L11.1 8.4L12.8 5.2L13.7 1.9L13.8 -1.3L13.3 -4.2L12.2 -6.6Z" fill="#500404"/><path d="M11 -8.5L9.6 -10L8.3 -11.1L7.1 -11.9L6 -12.5L5 -13L4 -13.3L3.1 -13.6L2.2 -13.7L1.3 -13.8L0.3 -13.9L-0.7 -13.9L-1.8 -13.8L-3 -13.6L-4.3 -13.2L-5.8 -12.6L-7.5 -11.7L-9.2 -10.4L-11 -8.5L-12.5 -6.1L-13.4 -3.2L-13.3 -0.1L-12.7 3.2L-11.9 7.1L-9.5 10.1L-6.3 12.3L-2.6 13.1L1.3 12.9L5 12.7L8.4 11L11 8.3L12.5 4.8L13.6 1.8L13.8 -1.3L13.3 -4.2L12.2 -6.6Z" fill="#5b0504"/><path d="M11 -8.5L9.6 -10L8.3 -11.1L7.1 -11.9L6 -12.5L5 -13L4 -13.3L3.1 -13.6L2.2 -13.7L1.3 -13.8L0.3 -13.9L-0.7 -13.9L-1.8 -13.8L-3 -13.6L-4.3 -13.2L-5.8 -12.6L-7.5 -11.7L-9.2 -10.4L-11 -8.5L-12.5 -6.1L-13.2 -3.3L-13.1 -0.3L-12.1 2.7L-11.2 6.3L-9.3 9.7L-6.1 11.6L-2.2 11.2L1.3 11.4L4.8 11.3L8.1 10.1L10.2 6.9L12.3 4.6L13.5 1.7L13.8 -1.3L13.3 -4.2L12.2 -6.6Z" fill="#660505"/><path d="M11 -8.5L9.6 -10L8.3 -11.1L7.1 -11.9L6 -12.5L5 -13L4 -13.3L3.1 -13.6L2.2 -13.7L1.3 -13.8L0.3 -13.9L-0.7 -13.9L-1.8 -13.8L-3 -13.6L-4.3 -13.2L-5.8 -12.6L-7.5 -11.7L-9.2 -10.4L-11 -8.5L-12.4 -6.1L-13 -3.4L-12.7 -0.5L-11.8 2.4L-9.9 4.8L-7.5 6.5L-4.6 7.5L-1.7 8.3L1.3 8.6L4.2 8.3L7.2 7.8L9.9 6.5L12 4.3L13.3 1.6L13.7 -1.3L13.3 -4.2L12.2 -6.6Z" fill="#700605"/><path d="M11 -8.5L9.6 -10L8.3 -11.1L7.1 -11.9L6 -12.5L5 -13L4 -13.3L3.1 -13.6L2.2 -13.7L1.3 -13.8L0.3 -13.9L-0.7 -13.9L-1.8 -13.8L-3 -13.6L-4.3 -13.2L-5.8 -12.6L-7.5 -11.7L-9.2 -10.4L-11 -8.5L-12.3 -6.2L-12.7 -3.5L-12.3 -0.7L-11.3 2L-9.5 4.3L-7.1 5.9L-4.3 6.8L-1.6 7.7L1.3 8L4.1 7.6L7 7.2L9.7 6L11.8 4L13.1 1.4L13.6 -1.4L13.3 -4.2L12.2 -6.6Z" fill="#7b0606"/><path d="M11 -8.5L9.6 -10L8.3 -11.1L7.1 -11.9L6 -12.5L5 -13L4 -13.3L3.1 -13.6L2.2 -13.7L1.3 -13.8L0.3 -13.9L-0.7 -13.9L-1.8 -13.8L-3 -13.6L-4.3 -13.2L-5.8 -12.6L-7.5 -11.7L-9.2 -10.4L-10.9 -8.5L-12.1 -6.2L-12.3 -3.6L-11.9 -1L-10.9 1.6L-9.1 3.8L-6.7 5.3L-4.1 6.1L-1.5 7L1.3 7.3L4 6.9L6.8 6.6L9.4 5.5L11.4 3.6L12.8 1.1L13.4 -1.6L13.2 -4.2L12.2 -6.6Z" fill="#860706"/><path d="M11 -8.5L9.6 -10L8.3 -11.1L7.1 -11.9L6 -12.5L5 -13L4 -13.3L3.1 -13.6L2.2 -13.7L1.3 -13.8L0.3 -13.9L-0.7 -13.9L-1.8 -13.8L-3 -13.6L-4.3 -13.2L-5.8 -12.6L-7.5 -11.7L-9.2 -10.4L-10.7 -8.5L-11.8 -6.3L-11.9 -3.8L-11.4 -1.3L-10.3 1.2L-8.6 3.2L-6.3 4.5L-3.8 5.4L-1.4 6.3L1.3 6.5L3.9 6.2L6.5 5.9L9 4.9L11.1 3.2L12.4 0.8L13.1 -1.7L13.1 -4.3L12.2 -6.6Z" fill="#910707"/><path d="M11 -8.5L9.6 -10L8.3 -11.1L7.1 -11.9L6 -12.5L5 -13L4 -13.3L3.1 -13.6L2.2 -13.7L1.3 -13.8L0.3 -13.9L-0.7 -13.9L-1.8 -13.8L-3 -13.6L-4.3 -13.2L-5.8 -12.6L-7.4 -11.7L-9.1 -10.4L-10.5 -8.5L-11.4 -6.3L-11.4 -4L-10.7 -1.6L-9.7 0.7L-8 2.5L-5.8 3.7L-3.6 4.7L-1.2 5.5L1.3 5.7L3.7 5.4L6.2 5.1L8.6 4.2L10.7 2.7L12 0.5L12.7 -1.9L12.8 -4.3L12.1 -6.6Z" fill="#9b0807"/><path d="M10.9 -8.5L9.6 -10L8.3 -11.1L7.1 -11.9L6 -12.5L5 -13L4 -13.3L3.1 -13.6L2.2 -13.7L1.3 -13.8L0.3 -13.8L-0.7 -13.8L-1.7 -13.7L-2.9 -13.5L-4.3 -13.2L-5.7 -12.6L-7.3 -11.7L-8.9 -10.3L-10.2 -8.5L-10.9 -6.4L-10.7 -4.2L-10 -2.1L-9 0.1L-7.4 1.7L-5.3 2.8L-3.2 3.8L-1.1 4.6L1.3 4.8L3.6 4.5L5.9 4.2L8.2 3.5L10.2 2.1L11.5 0L12.3 -2.2L12.5 -4.4L12 -6.7Z" fill="#a60808"/><path d="M10.7 -8.5L9.5 -10L8.3 -11.1L7.1 -11.9L6 -12.5L5 -13L4 -13.3L3.1 -13.5L2.1 -13.6L1.3 -13.7L0.3 -13.7L-0.6 -13.7L-1.7 -13.6L-2.9 -13.4L-4.2 -13.1L-5.6 -12.5L-7.1 -11.6L-8.6 -10.3L-9.7 -8.5L-10.3 -6.5L-10 -4.5L-9.1 -2.6L-8.1 -0.7L-6.6 0.8L-4.7 1.7L-2.9 2.9L-0.9 3.6L1.3 3.8L3.4 3.6L5.5 3.1L7.7 2.6L9.6 1.4L10.9 -0.5L11.8 -2.5L12.1 -4.6L11.7 -6.7Z" fill="#b10908"/><path d="M10.5 -8.5L9.4 -10L8.2 -11.1L7 -11.9L5.9 -12.5L4.9 -12.9L3.9 -13.2L3 -13.4L2.1 -13.5L1.3 -13.5L0.4 -13.6L-0.6 -13.5L-1.6 -13.4L-2.7 -13.3L-4 -12.9L-5.3 -12.4L-6.8 -11.5L-8.1 -10.2L-9.1 -8.5L-9.5 -6.7L-9.1 -4.8L-8 -3.2L-7.1 -1.6L-5.7 -0.3L-4.1 0.7L-2.5 1.8L-0.7 2.5L1.3 2.7L3.2 2.4L5.1 1.9L7.1 1.6L8.9 0.5L10.1 -1.1L11.1 -2.9L11.6 -4.8L11.3 -6.8Z" fill="#bc0909"/><path d="M10.1 -8.5L9.1 -9.9L7.9 -11L6.8 -11.8L5.8 -12.3L4.8 -12.7L3.8 -13L2.9 -13.2L2.1 -13.2L1.3 -13.3L0.4 -13.3L-0.5 -13.2L-1.4 -13.1L-2.4 -12.9L-3.6 -12.7L-4.9 -12.1L-6.3 -11.3L-7.5 -10.1L-8.3 -8.5L-8.5 -6.8L-8 -5.2L-6.8 -3.9L-5.6 -2.8L-4.5 -1.7L-3.4 -0.4L-2.1 0.5L-0.5 1.2L1.3 1.4L3 1.2L4.5 0.5L6.3 0.2L8 -0.5L9.1 -1.9L10.3 -3.3L11 -5L10.8 -6.9Z" fill="#c70a09"/><path d="M9.6 -8.5L8.6 -9.9L7.6 -10.9L6.5 -11.6L5.5 -12.1L4.5 -12.5L3.6 -12.7L2.8 -12.8L2 -12.8L1.3 -12.9L0.5 -12.9L-0.3 -12.8L-1.2 -12.7L-2 -12.5L-3.1 -12.2L-4.3 -11.8L-5.5 -11L-6.6 -9.9L-7.2 -8.5L-7.2 -7.1L-6.6 -5.7L-5.4 -4.7L-4.2 -4L-3.4 -3L-2.6 -1.9L-1.5 -1L-0.2 -0.5L1.3 -0.3L2.7 -0.5L4 -1L5.3 -1.6L6.7 -2L8 -2.9L9.3 -3.9L10.1 -5.3L10.1 -7Z" fill="#d20a0a"/><path d="M8.7 -8.5L7.9 -9.7L7 -10.6L6 -11.3L5 -11.7L4.1 -12L3.3 -12.1L2.6 -12.2L1.9 -12.2L1.3 -12.3L0.6 -12.3L-0.1 -12.3L-0.8 -12.1L-1.6 -11.9L-2.4 -11.6L-3.3 -11.2L-4.3 -10.6L-5.1 -9.7L-5.5 -8.5L-5.3 -7.4L-4.4 -6.5L-3.8 -5.6L-3.1 -4.9L-2.3 -4.3L-1.5 -3.8L-0.6 -3.4L0.2 -2.9L1.3 -2.7L2.2 -2.9L3.1 -3.4L4.1 -3.7L5.2 -3.8L6.7 -4L8 -4.6L8.9 -5.8L9.1 -7.2Z" fill="#dd0b0a"/><path d="M7.3 -8.5L6.7 -9.5L5.9 -10.2L5 -10.7L4.1 -11L3.3 -11L2.7 -11.1L2.2 -11.2L1.7 -11.3L1.3 -11.4L0.7 -11.4L0.2 -11.4L-0.3 -11.3L-0.9 -11.1L-1.4 -10.8L-2 -10.4L-2.4 -9.9L-2.8 -9.3L-2.9 -8.5L-2.9 -7.8L-2.6 -7.1L-2.3 -6.5L-1.8 -6L-1.2 -5.6L-0.6 -5.3L0 -5.1L0.6 -4.9L1.3 -4.9L1.9 -4.9L2.5 -5L3.2 -5.2L3.8 -5.5L4.5 -5.8L5.9 -5.8L7 -6.4L7.5 -7.4Z" fill="#e70c0b"/></g></defs>
<use href="#sA" x="495.1" y="522.2"/>
<use href="#sY" x="470.0" y="478.7"/>
<use href="#sY" x="470.0" y="565.7"/>
<use href="#sY" x="545.4" y="522.2"/>
<use href="#sA" x="595.7" y="580.3"/>
<use href="#sA" x="394.5" y="580.3"/>
<use href="#sA" x="495.1" y="406.1"/>
<use href="#sO" x="511.6" y="554.4"/>
<use href="#sO" x="514.8" y="491.8"/>
<use href="#sO" x="459.0" y="520.3"/>
<use href="#sA" x="520.2" y="594.8"/>
<use href="#sA" x="545.4" y="464.1"/>
<use href="#sA" x="419.7" y="507.7"/>
<use href="#sO" x="579.2" y="542.9"/>
<use href="#sO" x="471.0" y="439.0"/>
<use href="#sO" x="435.1" y="584.7"/>
<use href="#sO" x="370.5" y="589.1"/>
<use href="#sO" x="615.3" y="596.7"/>
<use href="#sO" x="499.5" y="380.8"/>
<use href="#sA" x="495.1" y="522.2"/>
<use href="#sO" x="411.0" y="501.5"/>
<use href="#sO" x="555.1" y="459.7"/>
<use href="#sO" x="519.2" y="605.4"/>
<use href="#sY" x="545.4" y="406.1"/>
<use href="#sA" x="470.0" y="362.6"/>
<use href="#sY" x="369.4" y="536.7"/>
<use href="#sY" x="570.5" y="623.8"/>
<use href="#sA" x="369.4" y="623.8"/>
<use href="#sA" x="570.5" y="536.7"/>
<use href="#sA" x="470.0" y="449.6"/>
<use href="#sA" x="645.9" y="580.3"/>
<use href="#sA" x="444.8" y="580.3"/>
<use href="#sO" x="478.6" y="490.0"/>
<use href="#sO" x="475.4" y="552.6"/>
<use href="#sO" x="531.2" y="524.1"/>
<use href="#sO" x="600.1" y="508.4"/>
<use href="#sO" x="430.7" y="438.2"/>
<use href="#sO" x="454.6" y="620.0"/>
<use href="#sA" x="495.1" y="290.0"/>
<use href="#sA" x="696.2" y="638.3"/>
<use href="#sA" x="294.0" y="638.3"/>
<use href="#sA" x="394.5" y="464.1"/>
<use href="#sA" x="595.7" y="464.1"/>
<use href="#sA" x="495.1" y="638.3"/>
<use href="#sO" x="571.6" y="571.5"/>
<use href="#sO" x="414.2" y="563.8"/>
<use href="#sO" x="499.5" y="431.4"/>
<use href="#sO" x="378.1" y="617.6"/>
<use href="#sO" x="636.2" y="575.8"/>
<use href="#sO" x="471.0" y="373.2"/>
<use href="#sY" x="419.7" y="652.8"/>
<use href="#sY" x="645.9" y="522.2"/>
<use href="#sY" x="520.2" y="565.7"/>
<use href="#sY" x="520.2" y="478.7"/>
<use href="#sY" x="444.8" y="522.2"/>
<use href="#sA" x="620.8" y="652.8"/>
<use href="#sA" x="545.4" y="348.0"/>
<use href="#sY" x="419.7" y="391.6"/>
<use href="#sA" x="319.1" y="565.7"/>
<use href="#sO" x="660.1" y="640.2"/>
<use href="#sO" x="310.4" y="606.1"/>
<use href="#sO" x="514.8" y="320.3"/>
<use href="#sO" x="358.4" y="554.3"/>
<use href="#sO" x="591.2" y="624.5"/>
<use href="#sO" x="535.6" y="387.8"/>
<use href="#sO" x="499.5" y="613.0"/>
<use href="#sO" x="571.6" y="472.9"/>
<use href="#sO" x="414.2" y="480.6"/>
<use href="#sA" x="394.5" y="580.3"/>
<use href="#sA" x="495.1" y="406.1"/>
<use href="#sA" x="595.7" y="580.3"/>
<use href="#sO" x="454.6" y="424.4"/>
<use href="#sO" x="430.7" y="606.2"/>
<use href="#sO" x="600.1" y="536.0"/>
<use href="#sO" x="478.6" y="554.4"/>
<use href="#sO" x="531.2" y="520.3"/>
<use href="#sO" x="475.4" y="491.8"/>
<use href="#sY" x="671.1" y="594.8"/>
<use href="#sY" x="570.5" y="420.6"/>
<use href="#sA" x="470.0" y="594.8"/>
<use href="#sA" x="369.4" y="420.6"/>
<use href="#sA" x="570.5" y="507.7"/>
<use href="#sA" x="645.9" y="464.1"/>
<use href="#sA" x="444.8" y="464.1"/>
<use href="#sY" x="470.0" y="333.5"/>
<use href="#sY" x="344.3" y="638.3"/>
<use href="#sY" x="369.4" y="507.7"/>
<use href="#sY" x="545.4" y="638.3"/>
<use href="#sA" x="470.0" y="681.8"/>
<use href="#sO" x="411.0" y="542.9"/>
<use href="#sO" x="519.2" y="439.0"/>
<use href="#sO" x="555.1" y="584.7"/>
<use href="#sO" x="399.0" y="392.3"/>
<use href="#sO" x="655.7" y="503.9"/>
<use href="#sO" x="430.7" y="670.4"/>
<use href="#sO" x="374.9" y="596.7"/>
<use href="#sO" x="490.7" y="380.8"/>
<use href="#sO" x="619.7" y="589.1"/>
<use href="#sA" x="595.7" y="348.0"/>
<use href="#sA" x="394.5" y="348.0"/>
<use href="#sA" x="696.2" y="522.2"/>
<use href="#sA" x="495.1" y="522.2"/>
<use href="#sA" x="394.5" y="696.4"/>
<use href="#sA" x="595.7" y="696.4"/>
<use href="#sA" x="294.0" y="522.2"/>
<use href="#sO" x="499.5" y="663.6"/>
<use href="#sO" x="615.3" y="447.7"/>
<use href="#sO" x="370.5" y="455.3"/>
<use href="#sO" x="334.5" y="540.5"/>
<use href="#sO" x="559.5" y="374.0"/>
<use href="#sO" x="591.2" y="652.1"/>
<use href="#sO" x="579.2" y="501.5"/>
<use href="#sO" x="435.1" y="459.7"/>
<use href="#sO" x="471.0" y="605.4"/>
<use href="#sY" x="620.8" y="536.7"/>
<use href="#sY" x="520.2" y="710.9"/>
<use href="#sY" x="444.8" y="406.1"/>
<use href="#sY" x="645.9" y="406.1"/>
<use href="#sA" x="520.2" y="362.6"/>
<use href="#sY" x="419.7" y="623.8"/>
<use href="#sA" x="620.8" y="623.8"/>
<use href="#sA" x="419.7" y="536.7"/>
<use href="#sA" x="520.2" y="449.6"/>
<use href="#sA" x="344.3" y="580.3"/>
<use href="#sA" x="545.4" y="580.3"/>
<use href="#sY" x="319.1" y="449.6"/>
<use href="#sO" x="511.6" y="490.0"/>
<use href="#sO" x="459.0" y="524.1"/>
<use href="#sO" x="514.8" y="552.6"/>
<use href="#sO" x="559.5" y="438.2"/>
<use href="#sO" x="390.1" y="508.4"/>
<use href="#sO" x="535.6" y="620.0"/>
<use href="#sA" x="595.7" y="464.1"/>
<use href="#sA" x="495.1" y="638.3"/>
<use href="#sA" x="394.5" y="464.1"/>
<use href="#sO" x="490.7" y="431.4"/>
<use href="#sO" x="418.6" y="571.5"/>
<use href="#sO" x="576.0" y="563.8"/>
<use href="#sO" x="631.8" y="490.1"/>
<use href="#sO" x="399.0" y="419.9"/>
<use href="#sO" x="454.6" y="656.6"/>
<use href="#sO" x="475.4" y="724.1"/>
<use href="#sO" x="679.8" y="438.3"/>
<use href="#sO" x="330.1" y="404.2"/>
<use href="#sY" x="570.5" y="652.8"/>
<use href="#sA" x="671.1" y="478.7"/>
<use href="#sY" x="470.0" y="478.7"/>
<use href="#sY" x="470.0" y="565.7"/>
<use href="#sY" x="570.5" y="391.6"/>
<use href="#sY" x="545.4" y="522.2"/>
<use href="#sY" x="344.3" y="522.2"/>
<use href="#sA" x="369.4" y="391.6"/>
<use href="#sA" x="444.8" y="696.4"/>
<use href="#sO" x="354.0" y="468.6"/>
<use href="#sO" x="519.2" y="671.2"/>
<use href="#sO" x="612.1" y="426.8"/>
<use href="#sO" x="490.7" y="613.0"/>
<use href="#sO" x="418.6" y="472.9"/>
<use href="#sO" x="576.0" y="480.6"/>
<use href="#sA" x="696.2" y="406.1"/>
<use href="#sA" x="294.0" y="406.1"/>
<use href="#sA" x="495.1" y="754.4"/>
<use href="#sA" x="595.7" y="580.3"/>
<use href="#sA" x="394.5" y="580.3"/>
<use href="#sA" x="495.1" y="406.1"/>
<use href="#sO" x="390.1" y="536.0"/>
<use href="#sO" x="559.5" y="606.2"/>
<use href="#sO" x="535.6" y="424.4"/>
<use href="#sO" x="511.6" y="554.4"/>
<use href="#sO" x="514.8" y="491.8"/>
<use href="#sO" x="459.0" y="520.3"/>
<use href="#sY" x="620.8" y="507.7"/>
<use href="#sY" x="419.7" y="420.6"/>
<use href="#sA" x="419.7" y="507.7"/>
<use href="#sA" x="620.8" y="420.6"/>
<use href="#sA" x="520.2" y="594.8"/>
<use href="#sA" x="344.3" y="464.1"/>
<use href="#sA" x="545.4" y="464.1"/>
<use href="#sY" x="444.8" y="638.3"/>
<use href="#sA" x="520.2" y="681.8"/>
<use href="#sO" x="435.1" y="584.7"/>
<use href="#sO" x="579.2" y="542.9"/>
<use href="#sO" x="471.0" y="439.0"/>
<use href="#sA" x="495.1" y="522.2"/>
<use href="#sO" x="490.7" y="663.6"/>
<use href="#sO" x="619.7" y="455.3"/>
<use href="#sO" x="374.9" y="447.7"/>
<use href="#sO" x="411.0" y="501.5"/>
<use href="#sO" x="519.2" y="605.4"/>
<use href="#sO" x="555.1" y="459.7"/>
<use href="#sA" x="570.5" y="536.7"/>
<use href="#sA" x="470.0" y="449.6"/>
<use href="#sA" x="444.8" y="580.3"/>
<use href="#sO" x="475.4" y="552.6"/>
<use href="#sO" x="478.6" y="490.0"/>
<use href="#sO" x="531.2" y="524.1"/>
<use href="#sA" x="394.5" y="464.1"/>
<use href="#sA" x="595.7" y="464.1"/>
<use href="#sA" x="495.1" y="638.3"/>
<use href="#sY" x="520.2" y="565.7"/>
<use href="#sY" x="520.2" y="478.7"/>
<use href="#sY" x="444.8" y="522.2"/>
<use href="#sA" x="495.1" y="522.2"/>
<path d="M429.4 327.9L420.0 333.3M373.8 360.0L369.7 362.4M343.9 377.3L319.5 391.4M515.9 302.0L570.2 333.3M616.4 360.0L631.5 368.7M660.3 385.4L670.7 391.4M675.4 650.3L621.1 681.7M574.9 708.4L559.8 717.1M531.0 733.7L520.6 739.7M675.4 418.1L621.1 449.4M574.9 476.1L559.8 484.9M531.0 501.5L520.6 507.5M359.7 676.2L369.1 681.7M415.3 708.4L419.4 710.7M445.2 725.6L469.6 739.7M314.8 418.1L369.1 449.4M415.3 476.1L430.4 484.9M459.2 501.5L469.6 507.5" stroke="#000" stroke-width="0.9" fill="none"/>
<path d="M696.2 562.5L696.2 551.6M696.2 498.2L696.2 493.6M696.2 463.8L696.2 435.5M294.0 614.3L294.0 551.6M294.0 498.2L294.0 480.8M294.0 447.5L294.0 435.5M495.1 730.4L495.1 667.7M495.1 614.3L495.1 596.9M495.1 563.6L495.1 551.6" stroke="#000" stroke-width="1" stroke-opacity="0.55" fill="none"/>
</svg><svg class="abs" style="left:51px;top:521px;will-change:transform" width="100" height="80" viewBox="70 725 100 80"><path d="M114.1 777.2L90.5 791.2" stroke="#ff7f50" stroke-width="1.4"/><path d="M88.4 792.6L92.4 787.6L94.4 791.8Z" fill="#ff7f50"/><path d="M114.1 777.2L137.7 791.2" stroke="#3cc46e" stroke-width="1.6"/><path d="M139.8 792.6L133.8 791.8L135.8 787.6Z" fill="#2fa860"/><path d="M114.1 777.6V754" stroke="#0000fe" stroke-width="2.1"/><path d="M114.1 748.2L111.2 754.8H117Z" fill="#0000fe"/><g font-family="Liberation Sans, sans-serif" font-weight="bold" font-style="italic" font-size="10.4" fill="#0a0a0a"><text x="116.4" y="748.8">c</text><text x="96.3" y="785.2">a</text><text x="137.2" y="785.2">b</text></g><g font-family="Liberation Sans, sans-serif" font-weight="bold" font-size="9" fill="#0a0a0a"><text x="123.8" y="746.3">*</text><text x="104.3" y="782.6">*</text><text x="145.4" y="782.6">*</text></g></svg></div>
<div class="ul" style="left:21px;top:872.5px;width:135px;height:2.2px;"></div>
<div class="pane" style="left:19px;top:875px;width:952px;height:82px;"></div>
<div class="fld" style="left:59px;top:886px;width:269px;height:27px;"></div>
<div class="fld" style="left:59px;top:919px;width:269px;height:27px;"></div>
<div class="fld" style="left:363px;top:886px;width:268px;height:27px;"></div>
<div class="fld" style="left:363px;top:919px;width:268px;height:27px;"></div>
<div class="fld" style="left:665px;top:886px;width:269px;height:27px;"></div>
<div class="fld" style="left:665px;top:919px;width:269px;height:27px;"></div>
<div class="status" style="left:19px;top:963px;width:952px;height:38px;"></div>
<div class="prog" style="left:493px;top:966px;width:470px;height:32px;"></div>
<div class="ul" style="left:979px;top:110.5px;width:70.5px;height:2.2px;"></div>
<div class="pane" style="left:977px;top:113px;width:781px;height:888px;"></div>
<div class="fld" style="left:988px;top:124px;width:146.5px;height:27.5px;"></div>
<svg class="abs" style="left:1115.5px;top:134px" width="13" height="8" viewBox="0 0 13 8"><path d="M1 1.3L6.4 6.7L11.8 1.3" stroke="#a3a5aa" stroke-width="1.4" fill="none"/></svg>
<div class="fld" style="left:1141px;top:124px;width:146.5px;height:27.5px;"></div>
<svg class="abs" style="left:1268.5px;top:134px" width="13" height="8" viewBox="0 0 13 8"><path d="M1 1.3L6.4 6.7L11.8 1.3" stroke="#a3a5aa" stroke-width="1.4" fill="none"/></svg>
<div class="fld" style="left:1294px;top:124px;width:147.5px;height:27.5px;"></div>
<svg class="abs" style="left:1422px;top:134px" width="13" height="8" viewBox="0 0 13 8"><path d="M1 1.3L6.4 6.7L11.8 1.3" stroke="#a3a5aa" stroke-width="1.4" fill="none"/></svg>
<div class="btn" style="left:1448px;top:124px;width:146.5px;height:26.5px;"></div>
<div class="btn" style="left:1601px;top:124px;width:146.5px;height:26.5px;"></div>
<div class="fld" style="left:1014px;top:158px;width:214.5px;height:27px;"></div>
<div class="fld" style="left:1261px;top:158px;width:215.5px;height:27px;"></div>
<div class="fld" style="left:1507px;top:158px;width:214.5px;height:27px;"></div>
<div class="fld" style="left:1014px;top:191px;width:214.5px;height:27px;"></div>
<div class="fld" style="left:1261px;top:191px;width:215.5px;height:27px;"></div>
<div class="fld" style="left:1507px;top:191px;width:214.5px;height:27px;"></div>
<div class="tbl" style="left:989px;top:225px;width:757.5px;height:698px;"></div>
<div class="abs" style="left:990px;top:226px;width:756px;height:20.5px;background:#dcdde1;border-radius:3px 3px 0 0"></div>
<div class="abs" style="left:990px;top:246.5px;width:16.5px;height:119.5px;background:#dcdde1"></div>
<div class="abs" style="left:1007px;top:246.5px;width:738.5px;height:30px;background:#9abff5"></div>
<div class="abs" style="left:1129.5px;top:246.5px;width:1px;height:119.5px;background:#d5d7dc"></div>
<div class="abs" style="left:1252.5px;top:246.5px;width:1px;height:119.5px;background:#d5d7dc"></div>
<div class="abs" style="left:1375.5px;top:246.5px;width:1px;height:119.5px;background:#d5d7dc"></div>
<div class="abs" style="left:1498.5px;top:246.5px;width:1px;height:119.5px;background:#d5d7dc"></div>
<div class="abs" style="left:1621.5px;top:246.5px;width:1px;height:119.5px;background:#d5d7dc"></div>
<div class="abs" style="left:1744.5px;top:246.5px;width:1px;height:119.5px;background:#d5d7dc"></div>
<div class="abs" style="left:1006px;top:226px;width:1px;height:20.5px;background:#f6f7f9"></div>
<div class="abs" style="left:1130px;top:226px;width:1px;height:20.5px;background:#f6f7f9"></div>
<div class="abs" style="left:1253px;top:226px;width:1px;height:20.5px;background:#f6f7f9"></div>
<div class="abs" style="left:1376px;top:226px;width:1px;height:20.5px;background:#f6f7f9"></div>
<div class="abs" style="left:1499px;top:226px;width:1px;height:20.5px;background:#f6f7f9"></div>
<div class="abs" style="left:1622px;top:226px;width:1px;height:20.5px;background:#f6f7f9"></div>
<div class="abs" style="left:1007px;top:275.8px;width:738.5px;height:1px;background:#d5d7dc"></div>
<div class="abs" style="left:990px;top:275.5px;width:17px;height:1.2px;background:#f4f5f7"></div>
<div class="abs" style="left:1007px;top:305.8px;width:738.5px;height:1px;background:#d5d7dc"></div>
<div class="abs" style="left:990px;top:305.5px;width:17px;height:1.2px;background:#f4f5f7"></div>
<div class="abs" style="left:1007px;top:335.8px;width:738.5px;height:1px;background:#d5d7dc"></div>
<div class="abs" style="left:990px;top:335.5px;width:17px;height:1.2px;background:#f4f5f7"></div>
<div class="abs" style="left:1007px;top:365.8px;width:738.5px;height:1px;background:#d5d7dc"></div>
<div class="abs" style="left:990px;top:365.5px;width:17px;height:1.2px;background:#f4f5f7"></div>
<div class="abs" style="left:990px;top:245.8px;width:17px;height:1.2px;background:#f4f5f7"></div>
<div class="btn" style="left:988px;top:930px;width:36px;height:27px;"></div>
<div class="fld" style="left:1030px;top:930px;width:138.5px;height:27px;"></div>
<div class="fld" style="left:1175px;top:930px;width:138.5px;height:27px;"></div>
<div class="fld" style="left:1320px;top:930px;width:138.5px;height:27px;"></div>
<div class="fld" style="left:1464.5px;top:930px;width:138.5px;height:27px;"></div>
<div class="fld" style="left:1609px;top:930px;width:138.5px;height:27px;"></div>
<div class="fld" style="left:988px;top:963px;width:216.5px;height:27px;"></div>
<div class="fld" style="left:1236px;top:963px;width:218px;height:27px;"></div>
<div class="fld" style="left:1488px;top:963px;width:216.5px;height:27px;"></div>
<div id="txt">
<div class="t" style="left:752.00px;top:9.00px;color:#2e2e2e;letter-spacing:0.475px;font-weight:bold;">NeuXtalViz</div>
<div class="t" style="left:835.80px;top:9.00px;color:#2e2e2e;letter-spacing:-0.118px;font-weight:bold;">0.1.0.dev96+d202412291959</div>
<div class="t" style="left:11.80px;top:42.00px;color:#43474d;letter-spacing:0.450px;">Applications</div>
<div class="t" style="left:27.65px;top:94.00px;color:#1a72e8;letter-spacing:-0.048px;">Save Screenshot</div>
<div class="t" style="left:45.70px;top:132.00px;color:#1a72e8;letter-spacing:0.207px;">Reset View</div>
<div class="t" style="left:35.90px;top:170.00px;color:#1a72e8;letter-spacing:-0.006px;">Reset Camera</div>
<div class="t" style="left:158.40px;top:90.00px;color:#1a72e8;letter-spacing:0.482px;">Direction View</div>
<div class="t" style="left:270.65px;top:90.00px;color:#43474d;letter-spacing:0.343px;">Manual View</div>
<div class="t" style="left:201.49px;top:129.00px;color:#1a72e8;letter-spacing:0.350px;">+Qx</div>
<div class="t" style="left:308.49px;top:129.00px;color:#1a72e8;letter-spacing:0.350px;">+Qy</div>
<div class="t" style="left:415.49px;top:129.00px;color:#1a72e8;letter-spacing:0.350px;">+Qz</div>
<div class="t" style="left:529.89px;top:129.00px;color:#1a72e8;letter-spacing:0.350px;">a*</div>
<div class="t" style="left:637.39px;top:129.00px;color:#1a72e8;letter-spacing:0.350px;">b*</div>
<div class="t" style="left:744.80px;top:129.00px;color:#1a72e8;letter-spacing:0.350px;">c*</div>
<div class="t" style="left:203.33px;top:163.00px;color:#1a72e8;letter-spacing:0.350px;">-Qx</div>
<div class="t" style="left:310.33px;top:163.00px;color:#1a72e8;letter-spacing:0.350px;">-Qy</div>
<div class="t" style="left:417.33px;top:163.00px;color:#1a72e8;letter-spacing:0.350px;">-Qz</div>
<div class="t" style="left:532.92px;top:163.00px;color:#1a72e8;letter-spacing:0.350px;">a</div>
<div class="t" style="left:640.42px;top:163.00px;color:#1a72e8;letter-spacing:0.350px;">b</div>
<div class="t" style="left:747.83px;top:163.00px;color:#1a72e8;letter-spacing:0.350px;">c</div>
<div class="t" style="left:844.40px;top:95.00px;color:#43474d;letter-spacing:0.258px;">Reciprocal Lattice</div>
<div class="t" style="left:844.40px;top:131.00px;color:#43474d;letter-spacing:0.102px;">Show Axes</div>
<div class="t" style="left:844.40px;top:167.00px;color:#43474d;letter-spacing:0.343px;">Parallel Projection</div>
<div class="t" style="left:23.65px;top:852.00px;color:#1a72e8;letter-spacing:0.340px;">Lattice Parameters</div>
<div class="t" style="left:164.40px;top:852.00px;color:#43474d;letter-spacing:0.440px;">Sample Orientation</div>
<div class="t" style="left:34.40px;top:890.00px;color:#43474d;letter-spacing:0.008px;">a:</div>
<div class="t" style="left:338.90px;top:890.00px;color:#43474d;letter-spacing:0.258px;">b:</div>
<div class="t" style="left:641.40px;top:890.00px;color:#43474d;letter-spacing:0.045px;">c:</div>
<div class="t" style="left:34.40px;top:923.00px;color:#43474d;letter-spacing:0.472px;">α:</div>
<div class="t" style="left:338.90px;top:923.00px;color:#43474d;letter-spacing:0.243px;">β:</div>
<div class="t" style="left:641.40px;top:923.00px;color:#43474d;letter-spacing:0.295px;">γ:</div>
<div class="t" style="left:65.65px;top:890.00px;color:#43474d;letter-spacing:0.362px;">11.93860</div>
<div class="t" style="left:65.65px;top:923.00px;color:#43474d;letter-spacing:0.188px;">90.000</div>
<div class="t" style="left:370.15px;top:890.00px;color:#43474d;letter-spacing:0.362px;">11.93860</div>
<div class="t" style="left:370.15px;top:923.00px;color:#43474d;letter-spacing:0.188px;">90.000</div>
<div class="t" style="left:671.90px;top:890.00px;color:#43474d;letter-spacing:0.362px;">11.93860</div>
<div class="t" style="left:671.90px;top:923.00px;color:#43474d;letter-spacing:0.188px;">90.000</div>
<div class="t" style="left:943.90px;top:890.00px;color:#43474d;letter-spacing:1.215px;">Å</div>
<div class="t" style="left:943.90px;top:923.00px;color:#43474d;letter-spacing:-0.367px;">°</div>
<div class="t" style="left:24.90px;top:972.00px;color:#43474d;letter-spacing:-0.031px;">CIF loaded!</div>
<div class="t" style="left:716.15px;top:972.00px;color:#43474d;letter-spacing:0.024px;">0%</div>
<div class="t" style="left:981.40px;top:90.00px;color:#1a72e8;letter-spacing:0.581px;">Structure</div>
<div class="t" style="left:1058.65px;top:90.00px;color:#43474d;letter-spacing:0.084px;">Factors</div>
<div class="t" style="left:992.65px;top:129.00px;color:#a6a8ac;letter-spacing:-0.051px;">Cubic</div>
<div class="t" style="left:1145.90px;top:129.00px;color:#a6a8ac;letter-spacing:-0.157px;">230: I a -3 d</div>
<div class="t" style="left:1298.90px;top:129.00px;color:#a6a8ac;letter-spacing:-0.271px;">I a -3 d</div>
<div class="t" style="left:1492.40px;top:128.00px;color:#1a72e8;letter-spacing:-0.324px;">Load CIF</div>
<div class="t" style="left:1644.65px;top:128.00px;color:#1a72e8;letter-spacing:-0.465px;">Save INS</div>
<div class="t" style="left:992.65px;top:162.00px;color:#43474d;letter-spacing:0.091px;">a</div>
<div class="t" style="left:1020.65px;top:162.00px;color:#43474d;letter-spacing:0.330px;">11.9386</div>
<div class="t" style="left:1239.90px;top:162.00px;color:#43474d;letter-spacing:0.841px;">b</div>
<div class="t" style="left:1267.90px;top:162.00px;color:#a6a8ac;letter-spacing:0.330px;">11.9386</div>
<div class="t" style="left:1487.40px;top:162.00px;color:#43474d;letter-spacing:1.665px;">c</div>
<div class="t" style="left:1513.65px;top:162.00px;color:#a6a8ac;letter-spacing:0.330px;">11.9386</div>
<div class="t" style="left:992.65px;top:195.00px;color:#43474d;letter-spacing:-0.231px;">α</div>
<div class="t" style="left:1020.65px;top:195.00px;color:#a6a8ac;letter-spacing:0.139px;">90.0000</div>
<div class="t" style="left:1239.90px;top:195.00px;color:#43474d;letter-spacing:0.561px;">β</div>
<div class="t" style="left:1267.90px;top:195.00px;color:#a6a8ac;letter-spacing:0.139px;">90.0000</div>
<div class="t" style="left:1487.40px;top:195.00px;color:#43474d;letter-spacing:1.665px;">γ</div>
<div class="t" style="left:1513.65px;top:195.00px;color:#a6a8ac;letter-spacing:0.139px;">90.0000</div>
<div class="t" style="left:1731.90px;top:162.00px;color:#43474d;letter-spacing:1.215px;">Å</div>
<div class="t" style="left:1732.40px;top:195.00px;color:#43474d;letter-spacing:-0.367px;">°</div>
<div class="t" style="left:1057.11px;top:227.00px;color:#1a72e8;letter-spacing:0.350px;font-weight:bold;">atm</div>
<div class="t" style="left:1189.42px;top:227.00px;color:#1a72e8;letter-spacing:0.350px;font-weight:bold;">x</div>
<div class="t" style="left:1312.42px;top:227.00px;color:#1a72e8;letter-spacing:0.350px;font-weight:bold;">y</div>
<div class="t" style="left:1435.83px;top:227.00px;color:#1a72e8;letter-spacing:0.350px;font-weight:bold;">z</div>
<div class="t" style="left:1549.51px;top:227.00px;color:#1a72e8;letter-spacing:0.350px;font-weight:bold;">occ</div>
<div class="t" style="left:1680.20px;top:227.00px;color:#1a72e8;letter-spacing:0.350px;font-weight:bold;">U</div>
<div class="t" style="left:994.12px;top:252.00px;color:#1a72e8;letter-spacing:0.350px;font-weight:bold;">1</div>
<div class="t" style="left:1009.90px;top:252.00px;color:#43474d;letter-spacing:0.350px;">Yb</div>
<div class="t" style="left:1133.65px;top:252.00px;color:#43474d;letter-spacing:0.350px;">0.1250</div>
<div class="t" style="left:1256.65px;top:252.00px;color:#43474d;letter-spacing:0.350px;">0.0000</div>
<div class="t" style="left:1379.65px;top:252.00px;color:#43474d;letter-spacing:0.350px;">0.2500</div>
<div class="t" style="left:1502.65px;top:252.00px;color:#43474d;letter-spacing:0.350px;">1.0000</div>
<div class="t" style="left:1625.65px;top:252.00px;color:#43474d;letter-spacing:0.350px;">0.2503</div>
<div class="t" style="left:994.12px;top:282.00px;color:#43474d;letter-spacing:0.350px;">2</div>
<div class="t" style="left:1009.90px;top:282.00px;color:#43474d;letter-spacing:0.350px;">Al</div>
<div class="t" style="left:1133.65px;top:282.00px;color:#43474d;letter-spacing:0.350px;">0.0000</div>
<div class="t" style="left:1256.65px;top:282.00px;color:#43474d;letter-spacing:0.350px;">0.0000</div>
<div class="t" style="left:1379.65px;top:282.00px;color:#43474d;letter-spacing:0.350px;">0.0000</div>
<div class="t" style="left:1502.65px;top:282.00px;color:#43474d;letter-spacing:0.350px;">1.0000</div>
<div class="t" style="left:1625.65px;top:282.00px;color:#43474d;letter-spacing:0.350px;">0.2290</div>
<div class="t" style="left:994.12px;top:312.00px;color:#43474d;letter-spacing:0.350px;">3</div>
<div class="t" style="left:1009.90px;top:312.00px;color:#43474d;letter-spacing:0.350px;">Al</div>
<div class="t" style="left:1133.65px;top:312.00px;color:#43474d;letter-spacing:0.350px;">0.3750</div>
<div class="t" style="left:1256.65px;top:312.00px;color:#43474d;letter-spacing:0.350px;">0.0000</div>
<div class="t" style="left:1379.65px;top:312.00px;color:#43474d;letter-spacing:0.350px;">0.2500</div>
<div class="t" style="left:1502.65px;top:312.00px;color:#43474d;letter-spacing:0.350px;">1.0000</div>
<div class="t" style="left:1625.65px;top:312.00px;color:#43474d;letter-spacing:0.350px;">0.2211</div>
<div class="t" style="left:994.12px;top:342.00px;color:#43474d;letter-spacing:0.350px;">4</div>
<div class="t" style="left:1009.90px;top:342.00px;color:#43474d;letter-spacing:0.350px;">O</div>
<div class="t" style="left:1132.90px;top:342.00px;color:#43474d;letter-spacing:0.350px;">-0.0299</div>
<div class="t" style="left:1256.65px;top:342.00px;color:#43474d;letter-spacing:0.350px;">0.0519</div>
<div class="t" style="left:1379.65px;top:342.00px;color:#43474d;letter-spacing:0.350px;">0.1497</div>
<div class="t" style="left:1502.65px;top:342.00px;color:#43474d;letter-spacing:0.350px;">1.0000</div>
<div class="t" style="left:1625.65px;top:342.00px;color:#43474d;letter-spacing:0.350px;">0.2211</div>
<div class="t" style="left:996.85px;top:934.00px;color:#1a72e8;letter-spacing:0.350px;">Yb</div>
<div class="t" style="left:1036.65px;top:934.00px;color:#43474d;letter-spacing:0.350px;">0.125</div>
<div class="t" style="left:1181.65px;top:934.00px;color:#43474d;letter-spacing:0.350px;">0.0</div>
<div class="t" style="left:1326.40px;top:934.00px;color:#43474d;letter-spacing:0.350px;">0.25</div>
<div class="t" style="left:1470.65px;top:934.00px;color:#43474d;letter-spacing:0.350px;">1.0</div>
<div class="t" style="left:1615.40px;top:934.00px;color:#43474d;letter-spacing:0.350px;">0.2503</div>
<div class="t" style="left:994.40px;top:967.00px;color:#43474d;letter-spacing:0.088px;">Yb3.0-Al5.0-O12.0</div>
<div class="t" style="left:1214.90px;top:967.00px;color:#43474d;letter-spacing:0.789px;">Z</div>
<div class="t" style="left:1242.40px;top:967.00px;color:#43474d;letter-spacing:0.350px;">8</div>
<div class="t" style="left:1464.90px;top:967.00px;color:#43474d;letter-spacing:0.533px;">Ω</div>
<div class="t" style="left:1494.90px;top:967.00px;color:#43474d;letter-spacing:0.184px;">1701.6107</div>
<div class="t" style="left:1715.40px;top:967.00px;color:#43474d;letter-spacing:0.641px;">Å^3</div>
</div>
</div></body></html>
